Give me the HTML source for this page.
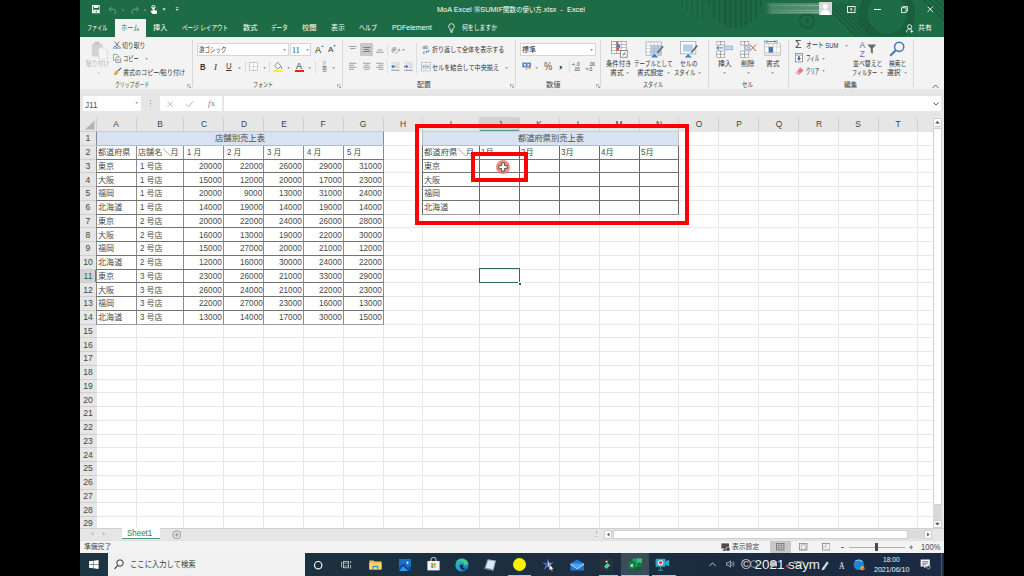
<!DOCTYPE html>
<html lang="ja"><head><meta charset="utf-8"><title>MoA Excel SUMIF</title><style>
html,body{margin:0;padding:0;}
body{width:1024px;height:576px;background:#000;position:relative;overflow:hidden;font-family:"Liberation Sans","Noto Sans CJK JP",sans-serif;}
#app{position:absolute;left:0;top:0;width:1024px;height:576px;overflow:hidden;}
#app div,#app span.t,#app svg{position:absolute;}
.t{white-space:nowrap;transform-origin:0 50%;display:block;}
</style></head><body><div id="app">
<div style="left:80px;top:0px;width:864px;height:36.5px;background:#1e6c46;"></div>
<div style="left:80px;top:36.5px;width:864px;height:52.5px;background:#f3f3f3;"></div>
<div style="left:80px;top:89px;width:864px;height:27.5px;background:#e6e6e6;"></div>
<div style="left:80px;top:116.5px;width:864px;height:412px;background:#ffffff;"></div>
<div style="left:80px;top:528px;width:864px;height:12.2px;background:#e6e6e6;"></div>
<div style="left:80px;top:540.2px;width:864px;height:13px;background:#f3f3f3;"></div>
<div style="left:80px;top:553.2px;width:864px;height:22.8px;background:#1d2f3c;"></div>
<div style="left:80px;top:116.5px;width:852.5px;height:15px;background:#e6e6e6;"></div>
<div style="left:80px;top:116.5px;width:16.5px;height:411.5px;background:#e6e6e6;"></div>
<svg style="left:80px;top:116.5px;" width="16.5" height="15" viewBox="0 0 16.5 15"><polygon points="14.5,3.5 14.5,12.5 5,12.5" fill="#b4b4b4"/></svg>
<div style="left:479.7px;top:116.5px;width:39.8px;height:15px;background:#d2d2d2;"></div>
<div style="left:479.7px;top:130.1px;width:39.8px;height:1.4px;background:#5a9c7a;"></div>
<div style="left:80px;top:269px;width:16.5px;height:13.75px;background:#d2d2d2;"></div>
<div style="left:95.3px;top:269px;width:1.2px;height:13.75px;background:#4a9070;"></div>
<div style="left:96px;top:131.5px;width:1px;height:396.5px;background:#e8e8e8;"></div>
<div style="left:96px;top:117.5px;width:1px;height:14px;background:#cfcfcf;"></div>
<div style="left:135.9px;top:131.5px;width:1px;height:396.5px;background:#e8e8e8;"></div>
<div style="left:135.9px;top:117.5px;width:1px;height:14px;background:#cfcfcf;"></div>
<div style="left:183.1px;top:131.5px;width:1px;height:396.5px;background:#e8e8e8;"></div>
<div style="left:183.1px;top:117.5px;width:1px;height:14px;background:#cfcfcf;"></div>
<div style="left:222.9px;top:131.5px;width:1px;height:396.5px;background:#e8e8e8;"></div>
<div style="left:222.9px;top:117.5px;width:1px;height:14px;background:#cfcfcf;"></div>
<div style="left:263.1px;top:131.5px;width:1px;height:396.5px;background:#e8e8e8;"></div>
<div style="left:263.1px;top:117.5px;width:1px;height:14px;background:#cfcfcf;"></div>
<div style="left:303px;top:131.5px;width:1px;height:396.5px;background:#e8e8e8;"></div>
<div style="left:303px;top:117.5px;width:1px;height:14px;background:#cfcfcf;"></div>
<div style="left:342.9px;top:131.5px;width:1px;height:396.5px;background:#e8e8e8;"></div>
<div style="left:342.9px;top:117.5px;width:1px;height:14px;background:#cfcfcf;"></div>
<div style="left:383px;top:131.5px;width:1px;height:396.5px;background:#e8e8e8;"></div>
<div style="left:383px;top:117.5px;width:1px;height:14px;background:#cfcfcf;"></div>
<div style="left:422px;top:131.5px;width:1px;height:396.5px;background:#e8e8e8;"></div>
<div style="left:422px;top:117.5px;width:1px;height:14px;background:#cfcfcf;"></div>
<div style="left:479.2px;top:131.5px;width:1px;height:396.5px;background:#e8e8e8;"></div>
<div style="left:479.2px;top:117.5px;width:1px;height:14px;background:#cfcfcf;"></div>
<div style="left:519px;top:131.5px;width:1px;height:396.5px;background:#e8e8e8;"></div>
<div style="left:519px;top:117.5px;width:1px;height:14px;background:#cfcfcf;"></div>
<div style="left:558.9px;top:131.5px;width:1px;height:396.5px;background:#e8e8e8;"></div>
<div style="left:558.9px;top:117.5px;width:1px;height:14px;background:#cfcfcf;"></div>
<div style="left:598.8px;top:131.5px;width:1px;height:396.5px;background:#e8e8e8;"></div>
<div style="left:598.8px;top:117.5px;width:1px;height:14px;background:#cfcfcf;"></div>
<div style="left:638.6px;top:131.5px;width:1px;height:396.5px;background:#e8e8e8;"></div>
<div style="left:638.6px;top:117.5px;width:1px;height:14px;background:#cfcfcf;"></div>
<div style="left:678.2px;top:131.5px;width:1px;height:396.5px;background:#e8e8e8;"></div>
<div style="left:678.2px;top:117.5px;width:1px;height:14px;background:#cfcfcf;"></div>
<div style="left:718px;top:131.5px;width:1px;height:396.5px;background:#e8e8e8;"></div>
<div style="left:718px;top:117.5px;width:1px;height:14px;background:#cfcfcf;"></div>
<div style="left:758.2px;top:131.5px;width:1px;height:396.5px;background:#e8e8e8;"></div>
<div style="left:758.2px;top:117.5px;width:1px;height:14px;background:#cfcfcf;"></div>
<div style="left:798.1px;top:131.5px;width:1px;height:396.5px;background:#e8e8e8;"></div>
<div style="left:798.1px;top:117.5px;width:1px;height:14px;background:#cfcfcf;"></div>
<div style="left:838px;top:131.5px;width:1px;height:396.5px;background:#e8e8e8;"></div>
<div style="left:838px;top:117.5px;width:1px;height:14px;background:#cfcfcf;"></div>
<div style="left:877.8px;top:131.5px;width:1px;height:396.5px;background:#e8e8e8;"></div>
<div style="left:877.8px;top:117.5px;width:1px;height:14px;background:#cfcfcf;"></div>
<div style="left:917.4px;top:131.5px;width:1px;height:396.5px;background:#e8e8e8;"></div>
<div style="left:917.4px;top:117.5px;width:1px;height:14px;background:#cfcfcf;"></div>
<div style="left:96.5px;top:131px;width:836px;height:1px;background:#e8e8e8;"></div>
<div style="left:80px;top:131px;width:16.5px;height:1px;background:#cfcfcf;"></div>
<div style="left:96.5px;top:144.75px;width:836px;height:1px;background:#e8e8e8;"></div>
<div style="left:80px;top:144.75px;width:16.5px;height:1px;background:#cfcfcf;"></div>
<div style="left:96.5px;top:158.5px;width:836px;height:1px;background:#e8e8e8;"></div>
<div style="left:80px;top:158.5px;width:16.5px;height:1px;background:#cfcfcf;"></div>
<div style="left:96.5px;top:172.25px;width:836px;height:1px;background:#e8e8e8;"></div>
<div style="left:80px;top:172.25px;width:16.5px;height:1px;background:#cfcfcf;"></div>
<div style="left:96.5px;top:186px;width:836px;height:1px;background:#e8e8e8;"></div>
<div style="left:80px;top:186px;width:16.5px;height:1px;background:#cfcfcf;"></div>
<div style="left:96.5px;top:199.75px;width:836px;height:1px;background:#e8e8e8;"></div>
<div style="left:80px;top:199.75px;width:16.5px;height:1px;background:#cfcfcf;"></div>
<div style="left:96.5px;top:213.5px;width:836px;height:1px;background:#e8e8e8;"></div>
<div style="left:80px;top:213.5px;width:16.5px;height:1px;background:#cfcfcf;"></div>
<div style="left:96.5px;top:227.25px;width:836px;height:1px;background:#e8e8e8;"></div>
<div style="left:80px;top:227.25px;width:16.5px;height:1px;background:#cfcfcf;"></div>
<div style="left:96.5px;top:241px;width:836px;height:1px;background:#e8e8e8;"></div>
<div style="left:80px;top:241px;width:16.5px;height:1px;background:#cfcfcf;"></div>
<div style="left:96.5px;top:254.75px;width:836px;height:1px;background:#e8e8e8;"></div>
<div style="left:80px;top:254.75px;width:16.5px;height:1px;background:#cfcfcf;"></div>
<div style="left:96.5px;top:268.5px;width:836px;height:1px;background:#e8e8e8;"></div>
<div style="left:80px;top:268.5px;width:16.5px;height:1px;background:#cfcfcf;"></div>
<div style="left:96.5px;top:282.25px;width:836px;height:1px;background:#e8e8e8;"></div>
<div style="left:80px;top:282.25px;width:16.5px;height:1px;background:#cfcfcf;"></div>
<div style="left:96.5px;top:296px;width:836px;height:1px;background:#e8e8e8;"></div>
<div style="left:80px;top:296px;width:16.5px;height:1px;background:#cfcfcf;"></div>
<div style="left:96.5px;top:309.75px;width:836px;height:1px;background:#e8e8e8;"></div>
<div style="left:80px;top:309.75px;width:16.5px;height:1px;background:#cfcfcf;"></div>
<div style="left:96.5px;top:323.5px;width:836px;height:1px;background:#e8e8e8;"></div>
<div style="left:80px;top:323.5px;width:16.5px;height:1px;background:#cfcfcf;"></div>
<div style="left:96.5px;top:337.25px;width:836px;height:1px;background:#e8e8e8;"></div>
<div style="left:80px;top:337.25px;width:16.5px;height:1px;background:#cfcfcf;"></div>
<div style="left:96.5px;top:351px;width:836px;height:1px;background:#e8e8e8;"></div>
<div style="left:80px;top:351px;width:16.5px;height:1px;background:#cfcfcf;"></div>
<div style="left:96.5px;top:364.75px;width:836px;height:1px;background:#e8e8e8;"></div>
<div style="left:80px;top:364.75px;width:16.5px;height:1px;background:#cfcfcf;"></div>
<div style="left:96.5px;top:378.5px;width:836px;height:1px;background:#e8e8e8;"></div>
<div style="left:80px;top:378.5px;width:16.5px;height:1px;background:#cfcfcf;"></div>
<div style="left:96.5px;top:392.25px;width:836px;height:1px;background:#e8e8e8;"></div>
<div style="left:80px;top:392.25px;width:16.5px;height:1px;background:#cfcfcf;"></div>
<div style="left:96.5px;top:406px;width:836px;height:1px;background:#e8e8e8;"></div>
<div style="left:80px;top:406px;width:16.5px;height:1px;background:#cfcfcf;"></div>
<div style="left:96.5px;top:419.75px;width:836px;height:1px;background:#e8e8e8;"></div>
<div style="left:80px;top:419.75px;width:16.5px;height:1px;background:#cfcfcf;"></div>
<div style="left:96.5px;top:433.5px;width:836px;height:1px;background:#e8e8e8;"></div>
<div style="left:80px;top:433.5px;width:16.5px;height:1px;background:#cfcfcf;"></div>
<div style="left:96.5px;top:447.25px;width:836px;height:1px;background:#e8e8e8;"></div>
<div style="left:80px;top:447.25px;width:16.5px;height:1px;background:#cfcfcf;"></div>
<div style="left:96.5px;top:461px;width:836px;height:1px;background:#e8e8e8;"></div>
<div style="left:80px;top:461px;width:16.5px;height:1px;background:#cfcfcf;"></div>
<div style="left:96.5px;top:474.75px;width:836px;height:1px;background:#e8e8e8;"></div>
<div style="left:80px;top:474.75px;width:16.5px;height:1px;background:#cfcfcf;"></div>
<div style="left:96.5px;top:488.5px;width:836px;height:1px;background:#e8e8e8;"></div>
<div style="left:80px;top:488.5px;width:16.5px;height:1px;background:#cfcfcf;"></div>
<div style="left:96.5px;top:502.25px;width:836px;height:1px;background:#e8e8e8;"></div>
<div style="left:80px;top:502.25px;width:16.5px;height:1px;background:#cfcfcf;"></div>
<div style="left:96.5px;top:516px;width:836px;height:1px;background:#e8e8e8;"></div>
<div style="left:80px;top:516px;width:16.5px;height:1px;background:#cfcfcf;"></div>
<span class="t" id="t1" style="left:116.45px;top:116.5px;font-size:9.4px;line-height:13.2px;color:#444;transform:translateX(-50%) scaleX(0.9);transform-origin:50% 50%;">A</span>
<span class="t" id="t2" style="left:160px;top:116.5px;font-size:9.4px;line-height:13.2px;color:#444;transform:translateX(-50%) scaleX(0.9);transform-origin:50% 50%;">B</span>
<span class="t" id="t3" style="left:203.5px;top:116.5px;font-size:9.4px;line-height:13.2px;color:#444;transform:translateX(-50%) scaleX(0.9);transform-origin:50% 50%;">C</span>
<span class="t" id="t4" style="left:243.5px;top:116.5px;font-size:9.4px;line-height:13.2px;color:#444;transform:translateX(-50%) scaleX(0.9);transform-origin:50% 50%;">D</span>
<span class="t" id="t5" style="left:283.55px;top:116.5px;font-size:9.4px;line-height:13.2px;color:#444;transform:translateX(-50%) scaleX(0.9);transform-origin:50% 50%;">E</span>
<span class="t" id="t6" style="left:323.45px;top:116.5px;font-size:9.4px;line-height:13.2px;color:#444;transform:translateX(-50%) scaleX(0.9);transform-origin:50% 50%;">F</span>
<span class="t" id="t7" style="left:363.45px;top:116.5px;font-size:9.4px;line-height:13.2px;color:#444;transform:translateX(-50%) scaleX(0.9);transform-origin:50% 50%;">G</span>
<span class="t" id="t8" style="left:403px;top:116.5px;font-size:9.4px;line-height:13.2px;color:#444;transform:translateX(-50%) scaleX(0.9);transform-origin:50% 50%;">H</span>
<span class="t" id="t9" style="left:451.1px;top:116.5px;font-size:9.4px;line-height:13.2px;color:#444;transform:translateX(-50%) scaleX(0.9);transform-origin:50% 50%;">I</span>
<span class="t" id="t10" style="left:499.6px;top:116.5px;font-size:9.4px;line-height:13.2px;color:#1f6e45;transform:translateX(-50%) scaleX(0.9);transform-origin:50% 50%;">J</span>
<span class="t" id="t11" style="left:539.45px;top:116.5px;font-size:9.4px;line-height:13.2px;color:#444;transform:translateX(-50%) scaleX(0.9);transform-origin:50% 50%;">K</span>
<span class="t" id="t12" style="left:579.35px;top:116.5px;font-size:9.4px;line-height:13.2px;color:#444;transform:translateX(-50%) scaleX(0.9);transform-origin:50% 50%;">L</span>
<span class="t" id="t13" style="left:619.2px;top:116.5px;font-size:9.4px;line-height:13.2px;color:#444;transform:translateX(-50%) scaleX(0.9);transform-origin:50% 50%;">M</span>
<span class="t" id="t14" style="left:658.9px;top:116.5px;font-size:9.4px;line-height:13.2px;color:#444;transform:translateX(-50%) scaleX(0.9);transform-origin:50% 50%;">N</span>
<span class="t" id="t15" style="left:698.6px;top:116.5px;font-size:9.4px;line-height:13.2px;color:#444;transform:translateX(-50%) scaleX(0.9);transform-origin:50% 50%;">O</span>
<span class="t" id="t16" style="left:738.6px;top:116.5px;font-size:9.4px;line-height:13.2px;color:#444;transform:translateX(-50%) scaleX(0.9);transform-origin:50% 50%;">P</span>
<span class="t" id="t17" style="left:778.65px;top:116.5px;font-size:9.4px;line-height:13.2px;color:#444;transform:translateX(-50%) scaleX(0.9);transform-origin:50% 50%;">Q</span>
<span class="t" id="t18" style="left:818.55px;top:116.5px;font-size:9.4px;line-height:13.2px;color:#444;transform:translateX(-50%) scaleX(0.9);transform-origin:50% 50%;">R</span>
<span class="t" id="t19" style="left:858.4px;top:116.5px;font-size:9.4px;line-height:13.2px;color:#444;transform:translateX(-50%) scaleX(0.9);transform-origin:50% 50%;">S</span>
<span class="t" id="t20" style="left:898.15px;top:116.5px;font-size:9.4px;line-height:13.2px;color:#444;transform:translateX(-50%) scaleX(0.9);transform-origin:50% 50%;">T</span>
<span class="t" id="t21" style="left:87.95px;top:131.28px;font-size:9.4px;line-height:13.2px;color:#444;transform:translateX(-50%) scaleX(0.92);transform-origin:50% 50%;">1</span>
<span class="t" id="t22" style="left:87.95px;top:145.03px;font-size:9.4px;line-height:13.2px;color:#444;transform:translateX(-50%) scaleX(0.92);transform-origin:50% 50%;">2</span>
<span class="t" id="t23" style="left:87.95px;top:158.78px;font-size:9.4px;line-height:13.2px;color:#444;transform:translateX(-50%) scaleX(0.92);transform-origin:50% 50%;">3</span>
<span class="t" id="t24" style="left:87.95px;top:172.53px;font-size:9.4px;line-height:13.2px;color:#444;transform:translateX(-50%) scaleX(0.92);transform-origin:50% 50%;">4</span>
<span class="t" id="t25" style="left:87.95px;top:186.28px;font-size:9.4px;line-height:13.2px;color:#444;transform:translateX(-50%) scaleX(0.92);transform-origin:50% 50%;">5</span>
<span class="t" id="t26" style="left:87.95px;top:200.03px;font-size:9.4px;line-height:13.2px;color:#444;transform:translateX(-50%) scaleX(0.92);transform-origin:50% 50%;">6</span>
<span class="t" id="t27" style="left:87.95px;top:213.78px;font-size:9.4px;line-height:13.2px;color:#444;transform:translateX(-50%) scaleX(0.92);transform-origin:50% 50%;">7</span>
<span class="t" id="t28" style="left:87.95px;top:227.53px;font-size:9.4px;line-height:13.2px;color:#444;transform:translateX(-50%) scaleX(0.92);transform-origin:50% 50%;">8</span>
<span class="t" id="t29" style="left:87.95px;top:241.28px;font-size:9.4px;line-height:13.2px;color:#444;transform:translateX(-50%) scaleX(0.92);transform-origin:50% 50%;">9</span>
<span class="t" id="t30" style="left:87.95px;top:255.03px;font-size:9.4px;line-height:13.2px;color:#444;transform:translateX(-50%) scaleX(0.92);transform-origin:50% 50%;">10</span>
<span class="t" id="t31" style="left:87.95px;top:268.77px;font-size:9.4px;line-height:13.2px;color:#1f6e45;transform:translateX(-50%) scaleX(0.92);transform-origin:50% 50%;">11</span>
<span class="t" id="t32" style="left:87.95px;top:282.52px;font-size:9.4px;line-height:13.2px;color:#444;transform:translateX(-50%) scaleX(0.92);transform-origin:50% 50%;">12</span>
<span class="t" id="t33" style="left:87.95px;top:296.27px;font-size:9.4px;line-height:13.2px;color:#444;transform:translateX(-50%) scaleX(0.92);transform-origin:50% 50%;">13</span>
<span class="t" id="t34" style="left:87.95px;top:310.02px;font-size:9.4px;line-height:13.2px;color:#444;transform:translateX(-50%) scaleX(0.92);transform-origin:50% 50%;">14</span>
<span class="t" id="t35" style="left:87.95px;top:323.77px;font-size:9.4px;line-height:13.2px;color:#444;transform:translateX(-50%) scaleX(0.92);transform-origin:50% 50%;">15</span>
<span class="t" id="t36" style="left:87.95px;top:337.52px;font-size:9.4px;line-height:13.2px;color:#444;transform:translateX(-50%) scaleX(0.92);transform-origin:50% 50%;">16</span>
<span class="t" id="t37" style="left:87.95px;top:351.27px;font-size:9.4px;line-height:13.2px;color:#444;transform:translateX(-50%) scaleX(0.92);transform-origin:50% 50%;">17</span>
<span class="t" id="t38" style="left:87.95px;top:365.02px;font-size:9.4px;line-height:13.2px;color:#444;transform:translateX(-50%) scaleX(0.92);transform-origin:50% 50%;">18</span>
<span class="t" id="t39" style="left:87.95px;top:378.77px;font-size:9.4px;line-height:13.2px;color:#444;transform:translateX(-50%) scaleX(0.92);transform-origin:50% 50%;">19</span>
<span class="t" id="t40" style="left:87.95px;top:392.52px;font-size:9.4px;line-height:13.2px;color:#444;transform:translateX(-50%) scaleX(0.92);transform-origin:50% 50%;">20</span>
<span class="t" id="t41" style="left:87.95px;top:406.27px;font-size:9.4px;line-height:13.2px;color:#444;transform:translateX(-50%) scaleX(0.92);transform-origin:50% 50%;">21</span>
<span class="t" id="t42" style="left:87.95px;top:420.02px;font-size:9.4px;line-height:13.2px;color:#444;transform:translateX(-50%) scaleX(0.92);transform-origin:50% 50%;">22</span>
<span class="t" id="t43" style="left:87.95px;top:433.77px;font-size:9.4px;line-height:13.2px;color:#444;transform:translateX(-50%) scaleX(0.92);transform-origin:50% 50%;">23</span>
<span class="t" id="t44" style="left:87.95px;top:447.52px;font-size:9.4px;line-height:13.2px;color:#444;transform:translateX(-50%) scaleX(0.92);transform-origin:50% 50%;">24</span>
<span class="t" id="t45" style="left:87.95px;top:461.27px;font-size:9.4px;line-height:13.2px;color:#444;transform:translateX(-50%) scaleX(0.92);transform-origin:50% 50%;">25</span>
<span class="t" id="t46" style="left:87.95px;top:475.02px;font-size:9.4px;line-height:13.2px;color:#444;transform:translateX(-50%) scaleX(0.92);transform-origin:50% 50%;">26</span>
<span class="t" id="t47" style="left:87.95px;top:488.77px;font-size:9.4px;line-height:13.2px;color:#444;transform:translateX(-50%) scaleX(0.92);transform-origin:50% 50%;">27</span>
<span class="t" id="t48" style="left:87.95px;top:502.52px;font-size:9.4px;line-height:13.2px;color:#444;transform:translateX(-50%) scaleX(0.92);transform-origin:50% 50%;">28</span>
<span class="t" id="t49" style="left:87.95px;top:516.27px;font-size:9.4px;line-height:13.2px;color:#444;transform:translateX(-50%) scaleX(0.92);transform-origin:50% 50%;">29</span>
<div style="left:96.5px;top:131.5px;width:287px;height:13.75px;background:#d8e2f0;"></div>
<div style="left:96.5px;top:145.25px;width:287px;height:178.75px;background:#ffffff;"></div>
<div style="left:96px;top:131.5px;width:1px;height:192.5px;background:#8c8c8c;"></div>
<div style="left:135.9px;top:145.25px;width:1px;height:178.75px;background:#8c8c8c;"></div>
<div style="left:183.1px;top:145.25px;width:1px;height:178.75px;background:#8c8c8c;"></div>
<div style="left:222.9px;top:145.25px;width:1px;height:178.75px;background:#8c8c8c;"></div>
<div style="left:263.1px;top:145.25px;width:1px;height:178.75px;background:#8c8c8c;"></div>
<div style="left:303px;top:145.25px;width:1px;height:178.75px;background:#8c8c8c;"></div>
<div style="left:342.9px;top:145.25px;width:1px;height:178.75px;background:#8c8c8c;"></div>
<div style="left:383px;top:131.5px;width:1px;height:192.5px;background:#8c8c8c;"></div>
<div style="left:96px;top:131px;width:288px;height:1px;background:#c6cedb;"></div>
<div style="left:96px;top:144.75px;width:288px;height:1px;background:#b4bdcc;"></div>
<div style="left:96px;top:158.5px;width:288px;height:1px;background:#737373;"></div>
<div style="left:96px;top:172.25px;width:288px;height:1px;background:#737373;"></div>
<div style="left:96px;top:186px;width:288px;height:1px;background:#737373;"></div>
<div style="left:96px;top:199.75px;width:288px;height:1px;background:#737373;"></div>
<div style="left:96px;top:213.5px;width:288px;height:1px;background:#737373;"></div>
<div style="left:96px;top:227.25px;width:288px;height:1px;background:#737373;"></div>
<div style="left:96px;top:241px;width:288px;height:1px;background:#737373;"></div>
<div style="left:96px;top:254.75px;width:288px;height:1px;background:#737373;"></div>
<div style="left:96px;top:268.5px;width:288px;height:1px;background:#737373;"></div>
<div style="left:96px;top:282.25px;width:288px;height:1px;background:#737373;"></div>
<div style="left:96px;top:296px;width:288px;height:1px;background:#737373;"></div>
<div style="left:96px;top:309.75px;width:288px;height:1px;background:#737373;"></div>
<div style="left:96px;top:323.5px;width:288px;height:1px;background:#9c9c9c;"></div>
<span class="t" id="t50" style="left:215px;top:133.38px;font-size:8.3px;line-height:11.6px;color:#4a4a4a;transform:scaleX(1.0041);">店舗別売上表</span>
<span class="t" id="t51" style="left:98.2px;top:147.12px;font-size:8.3px;line-height:11.6px;color:#4a4a4a;transform:scaleX(0.9728);">都道府県</span>
<span class="t" id="t52" style="left:138.1px;top:147.12px;font-size:8.3px;line-height:11.6px;color:#4a4a4a;transform:scaleX(0.9759);">店舗名＼月</span>
<span class="t" id="t53" style="left:186.9px;top:147.12px;font-size:8.3px;line-height:11.6px;color:#4a4a4a;transform:scaleX(0.9331);">1&nbsp;月</span>
<span class="t" id="t54" style="left:226.7px;top:147.12px;font-size:8.3px;line-height:11.6px;color:#4a4a4a;transform:scaleX(0.9331);">2&nbsp;月</span>
<span class="t" id="t55" style="left:266.9px;top:147.12px;font-size:8.3px;line-height:11.6px;color:#4a4a4a;transform:scaleX(0.9331);">3&nbsp;月</span>
<span class="t" id="t56" style="left:306.8px;top:147.12px;font-size:8.3px;line-height:11.6px;color:#4a4a4a;transform:scaleX(0.9331);">4&nbsp;月</span>
<span class="t" id="t57" style="left:346.7px;top:147.12px;font-size:8.3px;line-height:11.6px;color:#4a4a4a;transform:scaleX(0.9331);">5&nbsp;月</span>
<span class="t" id="t58" style="left:98.2px;top:160.88px;font-size:8.3px;line-height:11.6px;color:#4a4a4a;transform:scaleX(0.9754);">東京</span>
<span class="t" id="t59" style="left:139.9px;top:160.88px;font-size:8.3px;line-height:11.6px;color:#4a4a4a;transform:scaleX(0.9568);">1&nbsp;号店</span>
<span class="t" id="t60" style="left:199.35px;top:160.88px;font-size:8.3px;line-height:11.6px;color:#4a4a4a;transform:scaleX(0.9858);">20000</span>
<span class="t" id="t61" style="left:239.55px;top:160.88px;font-size:8.3px;line-height:11.6px;color:#4a4a4a;transform:scaleX(0.9858);">22000</span>
<span class="t" id="t62" style="left:279.45px;top:160.88px;font-size:8.3px;line-height:11.6px;color:#4a4a4a;transform:scaleX(0.9858);">26000</span>
<span class="t" id="t63" style="left:319.35px;top:160.88px;font-size:8.3px;line-height:11.6px;color:#4a4a4a;transform:scaleX(0.9858);">29000</span>
<span class="t" id="t64" style="left:359.45px;top:160.88px;font-size:8.3px;line-height:11.6px;color:#4a4a4a;transform:scaleX(0.9858);">31000</span>
<span class="t" id="t65" style="left:98.2px;top:174.62px;font-size:8.3px;line-height:11.6px;color:#4a4a4a;transform:scaleX(0.9754);">大阪</span>
<span class="t" id="t66" style="left:139.9px;top:174.62px;font-size:8.3px;line-height:11.6px;color:#4a4a4a;transform:scaleX(0.9568);">1&nbsp;号店</span>
<span class="t" id="t67" style="left:199.35px;top:174.62px;font-size:8.3px;line-height:11.6px;color:#4a4a4a;transform:scaleX(0.9858);">15000</span>
<span class="t" id="t68" style="left:239.55px;top:174.62px;font-size:8.3px;line-height:11.6px;color:#4a4a4a;transform:scaleX(0.9858);">12000</span>
<span class="t" id="t69" style="left:279.45px;top:174.62px;font-size:8.3px;line-height:11.6px;color:#4a4a4a;transform:scaleX(0.9858);">20000</span>
<span class="t" id="t70" style="left:319.35px;top:174.62px;font-size:8.3px;line-height:11.6px;color:#4a4a4a;transform:scaleX(0.9858);">17000</span>
<span class="t" id="t71" style="left:359.45px;top:174.62px;font-size:8.3px;line-height:11.6px;color:#4a4a4a;transform:scaleX(0.9858);">23000</span>
<span class="t" id="t72" style="left:98.2px;top:188.38px;font-size:8.3px;line-height:11.6px;color:#4a4a4a;transform:scaleX(0.9754);">福岡</span>
<span class="t" id="t73" style="left:139.9px;top:188.38px;font-size:8.3px;line-height:11.6px;color:#4a4a4a;transform:scaleX(0.9568);">1&nbsp;号店</span>
<span class="t" id="t74" style="left:199.35px;top:188.38px;font-size:8.3px;line-height:11.6px;color:#4a4a4a;transform:scaleX(0.9858);">20000</span>
<span class="t" id="t75" style="left:244.1px;top:188.38px;font-size:8.3px;line-height:11.6px;color:#4a4a4a;transform:scaleX(0.9854);">9000</span>
<span class="t" id="t76" style="left:279.45px;top:188.38px;font-size:8.3px;line-height:11.6px;color:#4a4a4a;transform:scaleX(0.9858);">13000</span>
<span class="t" id="t77" style="left:319.35px;top:188.38px;font-size:8.3px;line-height:11.6px;color:#4a4a4a;transform:scaleX(0.9858);">31000</span>
<span class="t" id="t78" style="left:359.45px;top:188.38px;font-size:8.3px;line-height:11.6px;color:#4a4a4a;transform:scaleX(0.9858);">24000</span>
<span class="t" id="t79" style="left:98.2px;top:202.12px;font-size:8.3px;line-height:11.6px;color:#4a4a4a;transform:scaleX(0.9757);">北海道</span>
<span class="t" id="t80" style="left:139.9px;top:202.12px;font-size:8.3px;line-height:11.6px;color:#4a4a4a;transform:scaleX(0.9568);">1&nbsp;号店</span>
<span class="t" id="t81" style="left:199.35px;top:202.12px;font-size:8.3px;line-height:11.6px;color:#4a4a4a;transform:scaleX(0.9858);">14000</span>
<span class="t" id="t82" style="left:239.55px;top:202.12px;font-size:8.3px;line-height:11.6px;color:#4a4a4a;transform:scaleX(0.9858);">19000</span>
<span class="t" id="t83" style="left:279.45px;top:202.12px;font-size:8.3px;line-height:11.6px;color:#4a4a4a;transform:scaleX(0.9858);">14000</span>
<span class="t" id="t84" style="left:319.35px;top:202.12px;font-size:8.3px;line-height:11.6px;color:#4a4a4a;transform:scaleX(0.9858);">19000</span>
<span class="t" id="t85" style="left:359.45px;top:202.12px;font-size:8.3px;line-height:11.6px;color:#4a4a4a;transform:scaleX(0.9858);">14000</span>
<span class="t" id="t86" style="left:98.2px;top:215.88px;font-size:8.3px;line-height:11.6px;color:#4a4a4a;transform:scaleX(0.9754);">東京</span>
<span class="t" id="t87" style="left:139.9px;top:215.88px;font-size:8.3px;line-height:11.6px;color:#4a4a4a;transform:scaleX(0.9568);">2&nbsp;号店</span>
<span class="t" id="t88" style="left:199.35px;top:215.88px;font-size:8.3px;line-height:11.6px;color:#4a4a4a;transform:scaleX(0.9858);">20000</span>
<span class="t" id="t89" style="left:239.55px;top:215.88px;font-size:8.3px;line-height:11.6px;color:#4a4a4a;transform:scaleX(0.9858);">22000</span>
<span class="t" id="t90" style="left:279.45px;top:215.88px;font-size:8.3px;line-height:11.6px;color:#4a4a4a;transform:scaleX(0.9858);">24000</span>
<span class="t" id="t91" style="left:319.35px;top:215.88px;font-size:8.3px;line-height:11.6px;color:#4a4a4a;transform:scaleX(0.9858);">26000</span>
<span class="t" id="t92" style="left:359.45px;top:215.88px;font-size:8.3px;line-height:11.6px;color:#4a4a4a;transform:scaleX(0.9858);">28000</span>
<span class="t" id="t93" style="left:98.2px;top:229.62px;font-size:8.3px;line-height:11.6px;color:#4a4a4a;transform:scaleX(0.9754);">大阪</span>
<span class="t" id="t94" style="left:139.9px;top:229.62px;font-size:8.3px;line-height:11.6px;color:#4a4a4a;transform:scaleX(0.9568);">2&nbsp;号店</span>
<span class="t" id="t95" style="left:199.35px;top:229.62px;font-size:8.3px;line-height:11.6px;color:#4a4a4a;transform:scaleX(0.9858);">16000</span>
<span class="t" id="t96" style="left:239.55px;top:229.62px;font-size:8.3px;line-height:11.6px;color:#4a4a4a;transform:scaleX(0.9858);">13000</span>
<span class="t" id="t97" style="left:279.45px;top:229.62px;font-size:8.3px;line-height:11.6px;color:#4a4a4a;transform:scaleX(0.9858);">19000</span>
<span class="t" id="t98" style="left:319.35px;top:229.62px;font-size:8.3px;line-height:11.6px;color:#4a4a4a;transform:scaleX(0.9858);">22000</span>
<span class="t" id="t99" style="left:359.45px;top:229.62px;font-size:8.3px;line-height:11.6px;color:#4a4a4a;transform:scaleX(0.9858);">30000</span>
<span class="t" id="t100" style="left:98.2px;top:243.38px;font-size:8.3px;line-height:11.6px;color:#4a4a4a;transform:scaleX(0.9754);">福岡</span>
<span class="t" id="t101" style="left:139.9px;top:243.38px;font-size:8.3px;line-height:11.6px;color:#4a4a4a;transform:scaleX(0.9568);">2&nbsp;号店</span>
<span class="t" id="t102" style="left:199.35px;top:243.38px;font-size:8.3px;line-height:11.6px;color:#4a4a4a;transform:scaleX(0.9858);">15000</span>
<span class="t" id="t103" style="left:239.55px;top:243.38px;font-size:8.3px;line-height:11.6px;color:#4a4a4a;transform:scaleX(0.9858);">27000</span>
<span class="t" id="t104" style="left:279.45px;top:243.38px;font-size:8.3px;line-height:11.6px;color:#4a4a4a;transform:scaleX(0.9858);">20000</span>
<span class="t" id="t105" style="left:319.35px;top:243.38px;font-size:8.3px;line-height:11.6px;color:#4a4a4a;transform:scaleX(0.9858);">21000</span>
<span class="t" id="t106" style="left:359.45px;top:243.38px;font-size:8.3px;line-height:11.6px;color:#4a4a4a;transform:scaleX(0.9858);">12000</span>
<span class="t" id="t107" style="left:98.2px;top:257.12px;font-size:8.3px;line-height:11.6px;color:#4a4a4a;transform:scaleX(0.9757);">北海道</span>
<span class="t" id="t108" style="left:139.9px;top:257.12px;font-size:8.3px;line-height:11.6px;color:#4a4a4a;transform:scaleX(0.9568);">2&nbsp;号店</span>
<span class="t" id="t109" style="left:199.35px;top:257.12px;font-size:8.3px;line-height:11.6px;color:#4a4a4a;transform:scaleX(0.9858);">12000</span>
<span class="t" id="t110" style="left:239.55px;top:257.12px;font-size:8.3px;line-height:11.6px;color:#4a4a4a;transform:scaleX(0.9858);">16000</span>
<span class="t" id="t111" style="left:279.45px;top:257.12px;font-size:8.3px;line-height:11.6px;color:#4a4a4a;transform:scaleX(0.9858);">30000</span>
<span class="t" id="t112" style="left:319.35px;top:257.12px;font-size:8.3px;line-height:11.6px;color:#4a4a4a;transform:scaleX(0.9858);">24000</span>
<span class="t" id="t113" style="left:359.45px;top:257.12px;font-size:8.3px;line-height:11.6px;color:#4a4a4a;transform:scaleX(0.9858);">22000</span>
<span class="t" id="t114" style="left:98.2px;top:270.88px;font-size:8.3px;line-height:11.6px;color:#4a4a4a;transform:scaleX(0.9754);">東京</span>
<span class="t" id="t115" style="left:139.9px;top:270.88px;font-size:8.3px;line-height:11.6px;color:#4a4a4a;transform:scaleX(0.9568);">3&nbsp;号店</span>
<span class="t" id="t116" style="left:199.35px;top:270.88px;font-size:8.3px;line-height:11.6px;color:#4a4a4a;transform:scaleX(0.9858);">23000</span>
<span class="t" id="t117" style="left:239.55px;top:270.88px;font-size:8.3px;line-height:11.6px;color:#4a4a4a;transform:scaleX(0.9858);">26000</span>
<span class="t" id="t118" style="left:279.45px;top:270.88px;font-size:8.3px;line-height:11.6px;color:#4a4a4a;transform:scaleX(0.9858);">21000</span>
<span class="t" id="t119" style="left:319.35px;top:270.88px;font-size:8.3px;line-height:11.6px;color:#4a4a4a;transform:scaleX(0.9858);">33000</span>
<span class="t" id="t120" style="left:359.45px;top:270.88px;font-size:8.3px;line-height:11.6px;color:#4a4a4a;transform:scaleX(0.9858);">29000</span>
<span class="t" id="t121" style="left:98.2px;top:284.62px;font-size:8.3px;line-height:11.6px;color:#4a4a4a;transform:scaleX(0.9754);">大阪</span>
<span class="t" id="t122" style="left:139.9px;top:284.62px;font-size:8.3px;line-height:11.6px;color:#4a4a4a;transform:scaleX(0.9568);">3&nbsp;号店</span>
<span class="t" id="t123" style="left:199.35px;top:284.62px;font-size:8.3px;line-height:11.6px;color:#4a4a4a;transform:scaleX(0.9858);">26000</span>
<span class="t" id="t124" style="left:239.55px;top:284.62px;font-size:8.3px;line-height:11.6px;color:#4a4a4a;transform:scaleX(0.9858);">24000</span>
<span class="t" id="t125" style="left:279.45px;top:284.62px;font-size:8.3px;line-height:11.6px;color:#4a4a4a;transform:scaleX(0.9858);">21000</span>
<span class="t" id="t126" style="left:319.35px;top:284.62px;font-size:8.3px;line-height:11.6px;color:#4a4a4a;transform:scaleX(0.9858);">22000</span>
<span class="t" id="t127" style="left:359.45px;top:284.62px;font-size:8.3px;line-height:11.6px;color:#4a4a4a;transform:scaleX(0.9858);">23000</span>
<span class="t" id="t128" style="left:98.2px;top:298.38px;font-size:8.3px;line-height:11.6px;color:#4a4a4a;transform:scaleX(0.9754);">福岡</span>
<span class="t" id="t129" style="left:139.9px;top:298.38px;font-size:8.3px;line-height:11.6px;color:#4a4a4a;transform:scaleX(0.9568);">3&nbsp;号店</span>
<span class="t" id="t130" style="left:199.35px;top:298.38px;font-size:8.3px;line-height:11.6px;color:#4a4a4a;transform:scaleX(0.9858);">22000</span>
<span class="t" id="t131" style="left:239.55px;top:298.38px;font-size:8.3px;line-height:11.6px;color:#4a4a4a;transform:scaleX(0.9858);">27000</span>
<span class="t" id="t132" style="left:279.45px;top:298.38px;font-size:8.3px;line-height:11.6px;color:#4a4a4a;transform:scaleX(0.9858);">23000</span>
<span class="t" id="t133" style="left:319.35px;top:298.38px;font-size:8.3px;line-height:11.6px;color:#4a4a4a;transform:scaleX(0.9858);">16000</span>
<span class="t" id="t134" style="left:359.45px;top:298.38px;font-size:8.3px;line-height:11.6px;color:#4a4a4a;transform:scaleX(0.9858);">13000</span>
<span class="t" id="t135" style="left:98.2px;top:312.12px;font-size:8.3px;line-height:11.6px;color:#4a4a4a;transform:scaleX(0.9757);">北海道</span>
<span class="t" id="t136" style="left:139.9px;top:312.12px;font-size:8.3px;line-height:11.6px;color:#4a4a4a;transform:scaleX(0.9568);">3&nbsp;号店</span>
<span class="t" id="t137" style="left:199.35px;top:312.12px;font-size:8.3px;line-height:11.6px;color:#4a4a4a;transform:scaleX(0.9858);">13000</span>
<span class="t" id="t138" style="left:239.55px;top:312.12px;font-size:8.3px;line-height:11.6px;color:#4a4a4a;transform:scaleX(0.9858);">14000</span>
<span class="t" id="t139" style="left:279.45px;top:312.12px;font-size:8.3px;line-height:11.6px;color:#4a4a4a;transform:scaleX(0.9858);">17000</span>
<span class="t" id="t140" style="left:319.35px;top:312.12px;font-size:8.3px;line-height:11.6px;color:#4a4a4a;transform:scaleX(0.9858);">30000</span>
<span class="t" id="t141" style="left:359.45px;top:312.12px;font-size:8.3px;line-height:11.6px;color:#4a4a4a;transform:scaleX(0.9858);">15000</span>
<div style="left:422.5px;top:131.5px;width:256.2px;height:13.75px;background:#d8e2f0;"></div>
<div style="left:422.5px;top:145.25px;width:256.2px;height:68.75px;background:#ffffff;"></div>
<div style="left:422px;top:131.5px;width:1px;height:13.75px;background:#b4bdcc;"></div>
<div style="left:422px;top:145.25px;width:1px;height:68.75px;background:#686868;"></div>
<div style="left:479.2px;top:145.25px;width:1px;height:0px;background:#b4bdcc;"></div>
<div style="left:479.2px;top:145.25px;width:1px;height:68.75px;background:#686868;"></div>
<div style="left:519px;top:145.25px;width:1px;height:0px;background:#b4bdcc;"></div>
<div style="left:519px;top:145.25px;width:1px;height:68.75px;background:#686868;"></div>
<div style="left:558.9px;top:145.25px;width:1px;height:0px;background:#b4bdcc;"></div>
<div style="left:558.9px;top:145.25px;width:1px;height:68.75px;background:#686868;"></div>
<div style="left:598.8px;top:145.25px;width:1px;height:0px;background:#b4bdcc;"></div>
<div style="left:598.8px;top:145.25px;width:1px;height:68.75px;background:#686868;"></div>
<div style="left:638.6px;top:145.25px;width:1px;height:0px;background:#b4bdcc;"></div>
<div style="left:638.6px;top:145.25px;width:1px;height:68.75px;background:#686868;"></div>
<div style="left:678.2px;top:131.5px;width:1px;height:13.75px;background:#b4bdcc;"></div>
<div style="left:678.2px;top:145.25px;width:1px;height:68.75px;background:#686868;"></div>
<div style="left:422px;top:131px;width:257.2px;height:1px;background:#c6cedb;"></div>
<div style="left:422px;top:144.75px;width:257.2px;height:1px;background:#b4bdcc;"></div>
<div style="left:422px;top:158.5px;width:257.2px;height:1px;background:#737373;"></div>
<div style="left:422px;top:172.25px;width:257.2px;height:1px;background:#737373;"></div>
<div style="left:422px;top:186px;width:257.2px;height:1px;background:#737373;"></div>
<div style="left:422px;top:199.75px;width:257.2px;height:1px;background:#737373;"></div>
<div style="left:422px;top:213.5px;width:257.2px;height:1px;background:#9c9c9c;"></div>
<span class="t" id="t142" style="left:517.6px;top:133.38px;font-size:8.3px;line-height:11.6px;color:#4a4a4a;transform:scaleX(0.9941);">都道府県別売上表</span>
<span class="t" id="t143" style="left:424.2px;top:147.12px;font-size:8.3px;line-height:11.6px;color:#4a4a4a;transform:scaleX(1.0041);">都道府県＼月</span>
<span class="t" id="t144" style="left:481.2px;top:147.12px;font-size:8.3px;line-height:11.6px;color:#4a4a4a;transform:scaleX(0.9674);">1月</span>
<span class="t" id="t145" style="left:521px;top:147.12px;font-size:8.3px;line-height:11.6px;color:#4a4a4a;transform:scaleX(0.9674);">2月</span>
<span class="t" id="t146" style="left:560.9px;top:147.12px;font-size:8.3px;line-height:11.6px;color:#4a4a4a;transform:scaleX(0.9674);">3月</span>
<span class="t" id="t147" style="left:600.8px;top:147.12px;font-size:8.3px;line-height:11.6px;color:#4a4a4a;transform:scaleX(0.9674);">4月</span>
<span class="t" id="t148" style="left:640.6px;top:147.12px;font-size:8.3px;line-height:11.6px;color:#4a4a4a;transform:scaleX(0.9674);">5月</span>
<span class="t" id="t149" style="left:424.2px;top:160.88px;font-size:8.3px;line-height:11.6px;color:#4a4a4a;transform:scaleX(0.9754);">東京</span>
<span class="t" id="t150" style="left:424.2px;top:174.62px;font-size:8.3px;line-height:11.6px;color:#4a4a4a;transform:scaleX(0.9754);">大阪</span>
<span class="t" id="t151" style="left:424.2px;top:188.38px;font-size:8.3px;line-height:11.6px;color:#4a4a4a;transform:scaleX(0.9754);">福岡</span>
<span class="t" id="t152" style="left:424.2px;top:202.12px;font-size:8.3px;line-height:11.6px;color:#4a4a4a;transform:scaleX(0.9757);">北海道</span>
<div style="left:479px;top:268.3px;width:41.1px;height:15.15px;border:1.1px solid #2c7050;box-sizing:border-box;"></div>
<div style="left:518.2px;top:281.55px;width:2.3px;height:2.3px;background:#235c42;border:0.4px solid #fff;"></div>
<div style="left:415.4px;top:124.2px;width:273.6px;height:100.5px;border:4.4px solid #fb0007;box-sizing:border-box;"></div>
<div style="left:471.4px;top:151.5px;width:56.8px;height:30.3px;border:4.3px solid #fb0007;box-sizing:border-box;"></div>
<div style="left:496.3px;top:160.3px;width:14px;height:14px;background:rgba(240,104,94,0.78);border-radius:50%;"></div>
<svg style="left:498.3px;top:162.3px;" width="10" height="10" viewBox="0 0 10 10"><path d="M3.6 0.8h2.8v2.8h2.8v2.8h-2.8v2.8h-2.8v-2.8h-2.8v-2.8h2.8z" fill="#fff" stroke="#4a4a4a" stroke-width="0.9"/></svg>
<div style="left:932.5px;top:116.5px;width:11.5px;height:411.5px;background:#e9e9e9;"></div>
<div style="left:933.4px;top:118.3px;width:8.9px;height:8.6px;background:#ffffff;border:0.5px solid #d0d0d0;box-sizing:border-box;"></div>
<div style="left:933.4px;top:127.7px;width:8.9px;height:377.5px;background:#ffffff;border:0.5px solid #d0d0d0;box-sizing:border-box;"></div>
<div style="left:933.4px;top:505.2px;width:8.9px;height:15px;background:#d9d9d9;"></div>
<div style="left:933.4px;top:520.3px;width:8.9px;height:8.2px;background:#ffffff;border:0.5px solid #d0d0d0;box-sizing:border-box;"></div>
<svg style="left:933.4px;top:118.3px;" width="8.9" height="8.6" viewBox="0 0 8.9 8.6"><polygon points="4.45,3 6.9,5.6 2,5.6" fill="#555"/></svg>
<svg style="left:933.4px;top:520.3px;" width="8.9" height="8.2" viewBox="0 0 8.9 8.2"><polygon points="4.45,5.4 6.9,2.8 2,2.8" fill="#555"/></svg>
<svg style="left:80px;top:0px;" width="864" height="36.5" viewBox="0 0 864 36.5"><defs><clipPath id="cp1"><circle cx="655" cy="1" r="27"/></clipPath><clipPath id="cp2"><rect x="0" y="0" width="864" height="36.5"/></clipPath></defs><g clip-path="url(#cp1)"><rect x="628" y="0" width="2.2" height="30" fill="#195f3e"/><rect x="633.2" y="0" width="2.2" height="30" fill="#195f3e"/><rect x="638.4" y="0" width="2.2" height="30" fill="#195f3e"/><rect x="643.6" y="0" width="3.4" height="30" fill="#195f3e"/><rect x="648.8" y="0" width="3.4" height="30" fill="#195f3e"/><rect x="654" y="0" width="3.4" height="30" fill="#195f3e"/><rect x="659.2" y="0" width="3.4" height="30" fill="#195f3e"/><rect x="664.4" y="0" width="3.4" height="30" fill="#195f3e"/><rect x="669.6" y="0" width="2.2" height="30" fill="#195f3e"/><rect x="674.8" y="0" width="2.2" height="30" fill="#195f3e"/><rect x="680" y="0" width="2.2" height="30" fill="#195f3e"/></g><rect x="601" y="0" width="1.6" height="8" fill="#195f3e" opacity="0.7"/><rect x="606.2" y="0" width="1.6" height="11" fill="#195f3e" opacity="0.7"/><rect x="611.4" y="0" width="1.6" height="14" fill="#195f3e" opacity="0.7"/><rect x="616.6" y="0" width="1.6" height="17" fill="#195f3e" opacity="0.7"/><rect x="621.8" y="0" width="1.6" height="20" fill="#195f3e" opacity="0.7"/><g clip-path="url(#cp2)"><circle cx="807" cy="14" r="24" fill="none" stroke="#195f3e" stroke-width="8.5"/><circle cx="727" cy="21" r="7" fill="none" stroke="#195f3e" stroke-width="2.6"/><circle cx="727" cy="21" r="2.4" fill="#195f3e"/><line x1="744" y1="4" x2="778" y2="38" stroke="#195f3e" stroke-width="2"/><line x1="749" y1="4" x2="783" y2="38" stroke="#195f3e" stroke-width="2"/><line x1="754" y1="4" x2="788" y2="38" stroke="#195f3e" stroke-width="2"/><line x1="759" y1="4" x2="793" y2="38" stroke="#195f3e" stroke-width="2"/><line x1="764" y1="4" x2="798" y2="38" stroke="#195f3e" stroke-width="2"/><line x1="769" y1="4" x2="803" y2="38" stroke="#195f3e" stroke-width="2"/><line x1="842" y1="-2" x2="866" y2="22" stroke="#195f3e" stroke-width="2"/><line x1="848" y1="-2" x2="872" y2="22" stroke="#195f3e" stroke-width="2"/><line x1="854" y1="-2" x2="878" y2="22" stroke="#195f3e" stroke-width="2"/><line x1="860" y1="-2" x2="884" y2="22" stroke="#195f3e" stroke-width="2"/></g></svg>
<svg style="left:91.6px;top:5.4px;" width="8.6" height="8.4" viewBox="0 0 8.6 8.4"><path d="M0.6 0.6h6.2l1.2 1.2v6h-7.4z" fill="none" stroke="#fff" stroke-width="1.1"/><rect x="2" y="0.8" width="4.2" height="2.2" fill="#fff"/><rect x="1.4" y="4.8" width="5.6" height="3" fill="#fff"/><rect x="3.6" y="5.8" width="1.2" height="1.6" fill="#1e6c46"/></svg>
<svg style="left:108px;top:5.5px;" width="9.5" height="8.5" viewBox="0 0 9.5 8.5"><path d="M1 3.2h4.6a2.7 2.7 0 0 1 0 5.2h-1.2" fill="none" stroke="#6fa289" stroke-width="1"/><path d="M3.3 0.8L0.9 3.2L3.3 5.6" fill="none" stroke="#6fa289" stroke-width="1"/></svg>
<svg style="left:120.5px;top:8.5px;" width="4" height="3" viewBox="0 0 4 3"><polygon points="0.5,0.5 3.5,0.5 2,2.3" fill="#6fa289"/></svg>
<svg style="left:129.8px;top:5.5px;" width="9.5" height="8.5" viewBox="0 0 9.5 8.5"><path d="M8.5 3.2h-4.6a2.7 2.7 0 0 0 0 5.2h1.2" fill="none" stroke="#6fa289" stroke-width="1"/><path d="M6.2 0.8L8.6 3.2L6.2 5.6" fill="none" stroke="#6fa289" stroke-width="1"/></svg>
<svg style="left:142.5px;top:8.5px;" width="4" height="3" viewBox="0 0 4 3"><polygon points="0.5,0.5 3.5,0.5 2,2.3" fill="#6fa289"/></svg>
<svg style="left:150.3px;top:4.6px;" width="7.5" height="9.5" viewBox="0 0 7.5 9.5"><circle cx="3.4" cy="2.1" r="1.7" fill="none" stroke="#fff" stroke-width="0.9"/><path d="M2.6 2v4.2l-1.3-0.6l-0.8 0.9l2.3 2.7h3.7l0.6-3.4l-2.9-0.9v-2.9z" fill="#fff"/></svg>
<svg style="left:162.2px;top:8.4px;" width="4.2" height="3" viewBox="0 0 4.2 3"><polygon points="0.4,0.4 3.8,0.4 2.1,2.5" fill="#fff"/></svg>
<svg style="left:175.4px;top:7.4px;" width="4.2" height="4.6" viewBox="0 0 4.2 4.6"><rect x="0.8" y="0.4" width="2.6" height="0.7" fill="#e4efe9"/><polygon points="0.6,2 3.6,2 2.1,3.8" fill="#e4efe9"/></svg>
<span class="t" id="t153" style="left:437.3px;top:3.95px;font-size:7.9px;line-height:11.1px;color:#ffffff;transform:scaleX(0.9294);">MoA Excel <span style="position:static;font-size:0.9em">㉟</span>SUMIF<span style="position:static;font-size:0.88em">関数の使い方</span>.xlsx&nbsp;&nbsp;-&nbsp;&nbsp;Excel</span>
<div style="left:765px;top:3.2px;width:54px;height:11px;background:linear-gradient(90deg,rgba(255,255,255,0) 0%,rgba(255,255,255,0.17) 12%,rgba(255,255,255,0.26) 100%);"></div>
<div style="left:769px;top:5.2px;width:50px;height:0.9px;background:linear-gradient(90deg,rgba(255,255,255,0.05),rgba(255,255,255,0.3));"></div>
<div style="left:769px;top:7.6px;width:50px;height:0.9px;background:linear-gradient(90deg,rgba(255,255,255,0.05),rgba(255,255,255,0.3));"></div>
<div style="left:769px;top:10px;width:50px;height:0.9px;background:linear-gradient(90deg,rgba(255,255,255,0.05),rgba(255,255,255,0.3));"></div>
<div style="left:769px;top:12.4px;width:50px;height:0.9px;background:linear-gradient(90deg,rgba(255,255,255,0.05),rgba(255,255,255,0.3));"></div>
<div style="left:819px;top:2px;width:12.5px;height:13.2px;background:#d6d6d6;"></div>
<svg style="left:819px;top:2px;" width="12.5" height="13.2" viewBox="0 0 12.5 13.2"><circle cx="6.25" cy="4.6" r="2.5" fill="#fff"/><path d="M1.6 13.2c0-4 2-5.4 4.65-5.4s4.65 1.4 4.65 5.4z" fill="#fff"/></svg>
<svg style="left:847px;top:5.5px;" width="8.5" height="7" viewBox="0 0 8.5 7"><rect x="0.5" y="0.5" width="7.5" height="6" fill="none" stroke="#fff" stroke-width="0.9"/><path d="M4.25 5.3V2.4M2.9 3.6l1.35-1.3l1.35 1.3" fill="none" stroke="#fff" stroke-width="0.8"/></svg>
<div style="left:874.2px;top:9.1px;width:6.4px;height:0.9px;background:#fff;"></div>
<svg style="left:900.6px;top:5.7px;" width="8" height="8" viewBox="0 0 8 8"><rect x="0.5" y="1.8" width="4.6" height="4.6" fill="none" stroke="#fff" stroke-width="0.8"/><path d="M1.9 1.8V0.5h4.6v4.6H5.1" fill="none" stroke="#fff" stroke-width="0.8"/></svg>
<svg style="left:927.4px;top:6.2px;" width="7" height="7" viewBox="0 0 7 7"><path d="M0.6 0.6L5.9 5.9M5.9 0.6L0.6 5.9" stroke="#fff" stroke-width="0.9" fill="none"/></svg>
<div style="left:115px;top:19.3px;width:31px;height:17.5px;background:#f3f3f3;"></div>
<span class="t" id="t154" style="left:86.8px;top:23px;font-size:7.4px;line-height:10.4px;color:#ffffff;transform:scaleX(0.6863);">ファイル</span>
<span class="t" id="t155" style="left:121.2px;top:23px;font-size:7.4px;line-height:10.4px;color:#1e6c46;transform:scaleX(0.8336);">ホーム</span>
<span class="t" id="t156" style="left:153.2px;top:23px;font-size:7.4px;line-height:10.4px;color:#ffffff;transform:scaleX(0.9664);">挿入</span>
<span class="t" id="t157" style="left:181.8px;top:23px;font-size:7.4px;line-height:10.4px;color:#ffffff;transform:scaleX(0.7570);">ページ レイアウト</span>
<span class="t" id="t158" style="left:242.5px;top:23px;font-size:7.4px;line-height:10.4px;color:#ffffff;transform:scaleX(0.9799);">数式</span>
<span class="t" id="t159" style="left:271.2px;top:23px;font-size:7.4px;line-height:10.4px;color:#ffffff;transform:scaleX(0.7572);">データ</span>
<span class="t" id="t160" style="left:302px;top:23px;font-size:7.4px;line-height:10.4px;color:#ffffff;transform:scaleX(0.9799);">校閲</span>
<span class="t" id="t161" style="left:331px;top:23px;font-size:7.4px;line-height:10.4px;color:#ffffff;transform:scaleX(0.9326);">表示</span>
<span class="t" id="t162" style="left:359px;top:23px;font-size:7.4px;line-height:10.4px;color:#ffffff;transform:scaleX(0.8113);">ヘルプ</span>
<span class="t" id="t163" style="left:391.8px;top:23px;font-size:7.4px;line-height:10.4px;color:#ffffff;transform:scaleX(0.9665);">PDFelement</span>
<svg style="left:447.5px;top:22.7px;" width="7" height="10.5" viewBox="0 0 7 10.5"><path d="M3.5 0.7a2.7 2.7 0 0 1 1.5 5v1.5h-3v-1.5a2.7 2.7 0 0 1 1.5-5z" fill="none" stroke="#fff" stroke-width="0.8"/><path d="M2.2 8.4h2.6M2.6 9.6h1.8" stroke="#fff" stroke-width="0.7"/></svg>
<span class="t" id="t164" style="left:462.2px;top:23px;font-size:7.4px;line-height:10.4px;color:#ffffff;transform:scaleX(0.7890);">何をしますか</span>
<svg style="left:906.3px;top:24px;" width="8" height="9" viewBox="0 0 8 9"><circle cx="3.6" cy="2.8" r="2.1" fill="none" stroke="#fff" stroke-width="0.85"/><path d="M0.5 8.4c0-2.4 1.4-3.4 3.1-3.4c0.9 0 1.7 0.3 2.2 0.8M5.7 6v2.8M4.3 7.4h2.8" fill="none" stroke="#fff" stroke-width="0.85"/></svg>
<span class="t" id="t165" style="left:918px;top:22.5px;font-size:7.4px;line-height:10.4px;color:#ffffff;transform:scaleX(0.9326);">共有</span>
<div style="left:192.3px;top:39.5px;width:0.9px;height:47px;background:#d8d8d8;"></div>
<div style="left:342.2px;top:39.5px;width:0.9px;height:47px;background:#d8d8d8;"></div>
<div style="left:515.2px;top:39.5px;width:0.9px;height:47px;background:#d8d8d8;"></div>
<div style="left:600.3px;top:39.5px;width:0.9px;height:47px;background:#d8d8d8;"></div>
<div style="left:707.9px;top:39.5px;width:0.9px;height:47px;background:#d8d8d8;"></div>
<div style="left:788.2px;top:39.5px;width:0.9px;height:47px;background:#d8d8d8;"></div>
<div style="left:913.1px;top:39.5px;width:0.9px;height:47px;background:#d8d8d8;"></div>
<span class="t" id="t166" style="left:114.6px;top:80.45px;font-size:6.9px;line-height:9.7px;color:#444;transform:scaleX(0.7049);">クリップボード</span>
<span class="t" id="t167" style="left:252.5px;top:80.45px;font-size:6.9px;line-height:9.7px;color:#444;transform:scaleX(0.7256);">フォント</span>
<span class="t" id="t168" style="left:417.2px;top:80.45px;font-size:6.9px;line-height:9.7px;color:#444;transform:scaleX(1.0014);">配置</span>
<span class="t" id="t169" style="left:545.8px;top:80.45px;font-size:6.9px;line-height:9.7px;color:#444;transform:scaleX(1.0522);">数値</span>
<span class="t" id="t170" style="left:643.2px;top:80.45px;font-size:6.9px;line-height:9.7px;color:#444;transform:scaleX(0.7256);">スタイル</span>
<span class="t" id="t171" style="left:742px;top:80.45px;font-size:6.9px;line-height:9.7px;color:#444;transform:scaleX(0.8127);">セル</span>
<span class="t" id="t172" style="left:844px;top:80.45px;font-size:6.9px;line-height:9.7px;color:#444;transform:scaleX(0.9578);">編集</span>
<svg style="left:186.5px;top:83.6px;" width="4" height="4" viewBox="0 0 4 4"><path d="M0.3 3.4V0.3H3.4" fill="none" stroke="#777" stroke-width="0.6"/><path d="M1.6 1.6L3.6 3.6M3.6 2.2v1.4h-1.4" fill="none" stroke="#777" stroke-width="0.6"/></svg>
<svg style="left:336.5px;top:83.6px;" width="4" height="4" viewBox="0 0 4 4"><path d="M0.3 3.4V0.3H3.4" fill="none" stroke="#777" stroke-width="0.6"/><path d="M1.6 1.6L3.6 3.6M3.6 2.2v1.4h-1.4" fill="none" stroke="#777" stroke-width="0.6"/></svg>
<svg style="left:509.5px;top:83.6px;" width="4" height="4" viewBox="0 0 4 4"><path d="M0.3 3.4V0.3H3.4" fill="none" stroke="#777" stroke-width="0.6"/><path d="M1.6 1.6L3.6 3.6M3.6 2.2v1.4h-1.4" fill="none" stroke="#777" stroke-width="0.6"/></svg>
<svg style="left:595.5px;top:83.6px;" width="4" height="4" viewBox="0 0 4 4"><path d="M0.3 3.4V0.3H3.4" fill="none" stroke="#777" stroke-width="0.6"/><path d="M1.6 1.6L3.6 3.6M3.6 2.2v1.4h-1.4" fill="none" stroke="#777" stroke-width="0.6"/></svg>
<svg style="left:90.5px;top:40.6px;" width="18" height="18.6" viewBox="0 0 18 18.6"><rect x="0.8" y="2.4" width="10.6" height="13.2" rx="0.8" fill="#d2d2d2"/><rect x="3.6" y="0.6" width="5" height="3.4" rx="0.8" fill="#c4c4c4"/><path d="M7.6 7h6l2.8 2.8v8.2h-8.8z" fill="#f6f6f6" stroke="#cfcfcf" stroke-width="0.7"/></svg>
<span class="t" id="t173" style="left:86.2px;top:59.15px;font-size:7.2px;line-height:10.1px;color:#b3b3b3;transform:scaleX(0.8100);">貼り付け</span>
<svg style="left:96.9px;top:71.8px;" width="3.2" height="2.2" viewBox="0 0 3.2 2.2"><polygon points="0.3,0.3 2.9,0.3 1.6,1.8" fill="#bdbdbd"/></svg>
<svg style="left:113.2px;top:40.8px;" width="8" height="8.6" viewBox="0 0 8 8.6"><path d="M1.6 0.5L5.4 5.6M6.2 0.5L2.4 5.6" stroke="#555" stroke-width="0.8" fill="none"/><circle cx="1.9" cy="6.9" r="1.4" fill="none" stroke="#3f78c2" stroke-width="0.8"/><circle cx="5.9" cy="6.9" r="1.4" fill="none" stroke="#3f78c2" stroke-width="0.8"/></svg>
<span class="t" id="t174" style="left:122.3px;top:40.95px;font-size:7.2px;line-height:10.1px;color:#333333;transform:scaleX(0.8135);">切り取り</span>
<svg style="left:113.2px;top:53.8px;" width="8.4" height="9" viewBox="0 0 8.4 9"><path d="M0.5 0.5h3.6l1.3 1.3v4.4h-4.9z" fill="#fff" stroke="#777" stroke-width="0.7"/><path d="M3 3h3.3l1.4 1.4v4.1h-4.7z" fill="#fff" stroke="#777" stroke-width="0.7"/><path d="M4 5.3h2.6M4 6.8h2.6" stroke="#3f78c2" stroke-width="0.6"/></svg>
<span class="t" id="t175" style="left:122.6px;top:54.25px;font-size:7.2px;line-height:10.1px;color:#333333;transform:scaleX(0.7230);">コピー</span>
<svg style="left:144.9px;top:58px;" width="3.2" height="2.2" viewBox="0 0 3.2 2.2"><polygon points="0.3,0.3 2.9,0.3 1.6,1.8" fill="#777"/></svg>
<svg style="left:112.8px;top:67px;" width="9" height="9" viewBox="0 0 9 9"><path d="M8.2 0.8L4.4 4.4" stroke="#555" stroke-width="1.1"/><path d="M3.2 3.4l2.4 2.4l-2.7 2.5c-1 0.6-2.4-0.8-1.9-1.9z" fill="#e8a33a"/></svg>
<span class="t" id="t176" style="left:122.6px;top:67.95px;font-size:7.2px;line-height:10.1px;color:#333333;transform:scaleX(0.8393);">書式のコピー/貼り付け</span>
<div style="left:196.8px;top:43px;width:92.2px;height:13.4px;background:#fff;border:0.6px solid #d6d6d6;box-sizing:border-box;"></div>
<span class="t" id="t177" style="left:198.5px;top:45.15px;font-size:7.2px;line-height:10.1px;color:#333333;transform:scaleX(0.7649);">游ゴシック</span>
<svg style="left:282.7px;top:48.8px;" width="3.2" height="2.2" viewBox="0 0 3.2 2.2"><polygon points="0.3,0.3 2.9,0.3 1.6,1.8" fill="#666"/></svg>
<div style="left:290px;top:43px;width:21.2px;height:13.4px;background:#fff;border:0.6px solid #d6d6d6;box-sizing:border-box;"></div>
<span class="t" id="t178" style="left:291.8px;top:44.15px;font-size:9.2px;line-height:12.9px;color:#333333;transform:scaleX(0.8578);font-family:&quot;Liberation Serif&quot;,serif;">11</span>
<svg style="left:305.9px;top:48.8px;" width="3.2" height="2.2" viewBox="0 0 3.2 2.2"><polygon points="0.3,0.3 2.9,0.3 1.6,1.8" fill="#666"/></svg>
<span class="t" id="t179" style="left:315.4px;top:43.9px;font-size:9px;line-height:12.6px;color:#333333;transform:scaleX(1.0306);">A</span>
<svg style="left:320.6px;top:45.2px;" width="3" height="2.4" viewBox="0 0 3 2.4"><polygon points="1.5,0.2 2.8,2 0.2,2" fill="#3f78c2"/></svg>
<span class="t" id="t180" style="left:328px;top:45.35px;font-size:7.8px;line-height:10.9px;color:#333333;transform:scaleX(1.0378);">A</span>
<svg style="left:332.8px;top:45.2px;" width="3" height="2.4" viewBox="0 0 3 2.4"><polygon points="1.5,2 2.8,0.2 0.2,0.2" fill="#3f78c2"/></svg>
<span class="t" id="t181" style="left:200.3px;top:60.8px;font-size:8.6px;line-height:12px;color:#333;font-weight:700;transform:scaleX(0.9005);">B</span>
<span class="t" id="t182" style="left:214.4px;top:60.8px;font-size:8.6px;line-height:12px;color:#333;font-style:italic;transform:scaleX(1.0435);font-family:&quot;Liberation Serif&quot;,serif;">I</span>
<span class="t" id="t183" style="left:226.2px;top:60.9px;font-size:8.4px;line-height:11.8px;color:#333;transform:scaleX(0.9237);text-decoration:underline;">U</span>
<svg style="left:238px;top:66.5px;" width="3.2" height="2.2" viewBox="0 0 3.2 2.2"><polygon points="0.3,0.3 2.9,0.3 1.6,1.8" fill="#7a7a7a"/></svg>
<div style="left:245.3px;top:60.5px;width:0.7px;height:12.5px;background:#dedede;"></div>
<svg style="left:249px;top:62.2px;" width="9" height="9" viewBox="0 0 9 9"><rect x="0.5" y="0.5" width="8" height="8" fill="#fff" stroke="#b4b4b4" stroke-width="0.7"/><path d="M4.5 0.5v8M0.5 4.5h8" stroke="#c6c6c6" stroke-width="0.6"/></svg>
<svg style="left:262.8px;top:66.5px;" width="3.2" height="2.2" viewBox="0 0 3.2 2.2"><polygon points="0.3,0.3 2.9,0.3 1.6,1.8" fill="#7a7a7a"/></svg>
<div style="left:269.4px;top:60.5px;width:0.7px;height:12.5px;background:#dedede;"></div>
<svg style="left:273px;top:60.6px;" width="10" height="11.5" viewBox="0 0 10 11.5"><path d="M4.6 1.2L8 5.2L4.8 8L1.8 4.8z" fill="#fdfdfd" stroke="#666" stroke-width="0.7"/><path d="M8.2 5.6c0.9 1.2 1 1.9 0.4 2.3c-0.6 0.3-1-0.6-0.4-2.3z" fill="#3f78c2"/><rect x="0.4" y="9" width="9.2" height="2.3" fill="#ffe92c"/></svg>
<svg style="left:286.6px;top:66.5px;" width="3.2" height="2.2" viewBox="0 0 3.2 2.2"><polygon points="0.3,0.3 2.9,0.3 1.6,1.8" fill="#7a7a7a"/></svg>
<span class="t" id="t184" style="left:296.2px;top:59.6px;font-size:8.6px;line-height:12px;color:#333;transform:scaleX(1.0463);">A</span>
<div style="left:294.6px;top:70.1px;width:9.2px;height:2.2px;background:#e81f1f;"></div>
<svg style="left:307.6px;top:66.5px;" width="3.2" height="2.2" viewBox="0 0 3.2 2.2"><polygon points="0.3,0.3 2.9,0.3 1.6,1.8" fill="#7a7a7a"/></svg>
<div style="left:315.3px;top:60.5px;width:0.7px;height:12.5px;background:#e0e0e0;"></div>
<span class="t" id="t185" style="left:322px;top:61.4px;font-size:4.6px;line-height:6.4px;color:#555;transform:scaleX(0.9112);">ア</span>
<span class="t" id="t186" style="left:321.6px;top:66px;font-size:5.4px;line-height:7.6px;color:#555;transform:scaleX(0.9249);">亜</span>
<svg style="left:332.2px;top:66.5px;" width="3.2" height="2.2" viewBox="0 0 3.2 2.2"><polygon points="0.3,0.3 2.9,0.3 1.6,1.8" fill="#7a7a7a"/></svg>
<svg style="left:349.4px;top:43.6px;" width="10" height="10" viewBox="0 0 10 10"><rect x="0" y="2" width="7.6" height="0.8" fill="#8a8a8a"/><rect x="1.2" y="4.2" width="5.2" height="0.8" fill="#8a8a8a"/></svg>
<div style="left:360.2px;top:43px;width:12.8px;height:13.4px;background:#c9c9c9;"></div>
<svg style="left:362.9px;top:45.2px;" width="10" height="10" viewBox="0 0 10 10"><rect x="0" y="2.2" width="7.4" height="0.8" fill="#6d6d6d"/><rect x="1.2" y="4.1" width="5" height="0.8" fill="#6d6d6d"/><rect x="0" y="6" width="7.4" height="0.8" fill="#6d6d6d"/></svg>
<svg style="left:376px;top:47px;" width="10" height="10" viewBox="0 0 10 10"><rect x="1.2" y="2.6" width="5.2" height="0.8" fill="#8a8a8a"/><rect x="0" y="4.8" width="7.6" height="0.8" fill="#8a8a8a"/></svg>
<div style="left:387px;top:43.5px;width:0.7px;height:12.5px;background:#e0e0e0;"></div>
<svg style="left:390.6px;top:44.8px;" width="10" height="9.6" viewBox="0 0 10 9.6"><text transform="rotate(-42 3.2 6.2)" x="0.6" y="6.4" font-size="5.6" fill="#5a5a5a" font-family="Liberation Sans,sans-serif">ab</text><path d="M4 9.2L8.8 4.6M8.9 4.5l-1.7 0.2M8.9 4.5l-0.2 1.7" stroke="#7a7a7a" stroke-width="0.6" fill="none"/></svg>
<svg style="left:402.2px;top:49.2px;" width="3.2" height="2.2" viewBox="0 0 3.2 2.2"><polygon points="0.3,0.3 2.9,0.3 1.6,1.8" fill="#7a7a7a"/></svg>
<div style="left:416.2px;top:42.5px;width:0.7px;height:31.5px;background:#dedede;"></div>
<svg style="left:421.6px;top:44.8px;" width="9" height="9.6" viewBox="0 0 9 9.6"><text x="0.6" y="4" font-size="5" fill="#555" font-family="Liberation Sans,sans-serif">ab</text><text x="0.8" y="8.6" font-size="5" fill="#555" font-family="Liberation Sans,sans-serif">c</text><path d="M6.8 4.6v2.2H4M5.1 5.7L3.9 6.8L5.1 7.9" stroke="#3f7fd0" stroke-width="0.8" fill="none"/></svg>
<span class="t" id="t187" style="left:431.6px;top:45.15px;font-size:7.2px;line-height:10.1px;color:#333333;transform:scaleX(0.8414);">折り返して全体を表示する</span>
<svg style="left:349.4px;top:62px;" width="10" height="10" viewBox="0 0 10 10"><rect x="0" y="0.8" width="7.4" height="0.8" fill="#8a8a8a"/><rect x="0" y="2.8" width="5" height="0.8" fill="#8a8a8a"/><rect x="0" y="4.8" width="7.4" height="0.8" fill="#8a8a8a"/><rect x="0" y="6.8" width="5" height="0.8" fill="#8a8a8a"/></svg>
<svg style="left:362.9px;top:62px;" width="10" height="10" viewBox="0 0 10 10"><rect x="0" y="0.8" width="7.4" height="0.8" fill="#8a8a8a"/><rect x="1.2" y="2.8" width="5" height="0.8" fill="#8a8a8a"/><rect x="0" y="4.8" width="7.4" height="0.8" fill="#8a8a8a"/><rect x="1.2" y="6.8" width="5" height="0.8" fill="#8a8a8a"/></svg>
<svg style="left:376.3px;top:62px;" width="10" height="10" viewBox="0 0 10 10"><rect x="0" y="0.8" width="7.4" height="0.8" fill="#8a8a8a"/><rect x="2.4" y="2.8" width="5" height="0.8" fill="#8a8a8a"/><rect x="0" y="4.8" width="7.4" height="0.8" fill="#8a8a8a"/><rect x="2.4" y="6.8" width="5" height="0.8" fill="#8a8a8a"/></svg>
<div style="left:387px;top:60.5px;width:0.7px;height:12.5px;background:#e0e0e0;"></div>
<svg style="left:390.8px;top:62px;" width="9" height="9.4" viewBox="0 0 9 9.4"><path d="M0.2 0.9h8.4" stroke="#c4c4c4" stroke-width="0.8"/><path d="M4.8 3h3.8M4.8 5.4h3.8" stroke="#b0b0b0" stroke-width="0.8"/><path d="M0.2 8.3h8.4" stroke="#7a7a7a" stroke-width="0.8"/><polygon points="0.2,4.5 2.4,2.3 2.4,3.7 4.4,3.7 4.4,5.3 2.4,5.3 2.4,6.7" fill="#3f78c2"/></svg>
<svg style="left:404px;top:62px;" width="9" height="9.4" viewBox="0 0 9 9.4"><path d="M0.2 0.9h8.4" stroke="#c4c4c4" stroke-width="0.8"/><path d="M4.8 3h3.8M4.8 5.4h3.8" stroke="#b0b0b0" stroke-width="0.8"/><path d="M0.2 8.3h8.4" stroke="#7a7a7a" stroke-width="0.8"/><polygon points="4.4,4.5 2.2,2.3 2.2,3.7 0.2,3.7 0.2,5.3 2.2,5.3 2.2,6.7" fill="#3f78c2"/></svg>
<svg style="left:420.6px;top:62px;" width="10" height="9.6" viewBox="0 0 10 9.6"><rect x="0.5" y="0.5" width="8.8" height="8.4" fill="#fff" stroke="#adadad" stroke-width="0.65"/><rect x="0.9" y="3.2" width="8" height="3" fill="#dde9f7"/><path d="M0.5 3h8.8M0.5 6.4h8.8M4.9 0.5v2.5M4.9 6.4v2.5" stroke="#a8a8a8" stroke-width="0.5"/><path d="M2 4.7h5.8M3 3.9l-1 0.8l1 0.8M6.8 3.9l1 0.8l-1 0.8" stroke="#5b93d3" stroke-width="0.6" fill="none"/></svg>
<span class="t" id="t188" style="left:431.6px;top:62.65px;font-size:7.2px;line-height:10.1px;color:#333333;transform:scaleX(0.8496);">セルを結合して中央揃え</span>
<svg style="left:504.6px;top:66.5px;" width="3.2" height="2.2" viewBox="0 0 3.2 2.2"><polygon points="0.3,0.3 2.9,0.3 1.6,1.8" fill="#7a7a7a"/></svg>
<div style="left:520px;top:43px;width:76px;height:13.4px;background:#fff;border:0.6px solid #d6d6d6;box-sizing:border-box;"></div>
<span class="t" id="t189" style="left:521.8px;top:45.15px;font-size:7.2px;line-height:10.1px;color:#333333;transform:scaleX(0.9590);">標準</span>
<svg style="left:589.6px;top:48.8px;" width="3.2" height="2.2" viewBox="0 0 3.2 2.2"><polygon points="0.3,0.3 2.9,0.3 1.6,1.8" fill="#666"/></svg>
<svg style="left:521.6px;top:62.4px;" width="10.5" height="9" viewBox="0 0 10.5 9"><rect x="0.4" y="0.6" width="8.4" height="4.8" fill="#3f78c2"/><rect x="1.8" y="1.8" width="5.6" height="2.4" fill="#dfe9f6"/><circle cx="4.6" cy="3" r="1" fill="#3f78c2"/><path d="M3.4 7.6c2-1.8 4-1.8 5.4-0.6" stroke="#e8b25a" stroke-width="1.3" fill="none"/></svg>
<svg style="left:535.2px;top:66.5px;" width="3.2" height="2.2" viewBox="0 0 3.2 2.2"><polygon points="0.3,0.3 2.9,0.3 1.6,1.8" fill="#7a7a7a"/></svg>
<span class="t" id="t190" style="left:543.6px;top:59.9px;font-size:10px;line-height:14px;color:#555;transform:scaleX(0.9207);">%</span>
<span class="t" id="t191" style="left:559.2px;top:55.1px;font-size:13px;line-height:18.2px;color:#333;font-weight:700;transform:scaleX(1.0462);font-family:&quot;Liberation Serif&quot;,serif;">,</span>
<div style="left:568.9px;top:60.5px;width:0.7px;height:12.5px;background:#dedede;"></div>
<svg style="left:572.2px;top:62px;" width="9.4" height="9.4" viewBox="0 0 9.4 9.4"><text x="3.6" y="4" font-size="4.7" fill="#333" font-family="Liberation Sans,sans-serif">.0</text><text x="1.4" y="8.6" font-size="4.7" fill="#333" font-family="Liberation Sans,sans-serif">.00</text><path d="M3 2.4H0.6M1.6 1.4l-1 1l1 1" stroke="#2f6fbe" stroke-width="0.7" fill="none"/></svg>
<svg style="left:585.4px;top:62px;" width="9.4" height="9.4" viewBox="0 0 9.4 9.4"><text x="3.6" y="4" font-size="4.7" fill="#333" font-family="Liberation Sans,sans-serif">.00</text><text x="3.2" y="8.6" font-size="4.7" fill="#333" font-family="Liberation Sans,sans-serif">.0</text><path d="M0.6 6.8H3M2 5.8l1 1l-1 1" stroke="#2f6fbe" stroke-width="0.7" fill="none"/></svg>
<svg style="left:611px;top:40.6px;" width="17.5" height="17.5" viewBox="0 0 17.5 17.5"><rect x="0.6" y="0.6" width="14.6" height="12" fill="#fff" stroke="#8a8a8a" stroke-width="0.7"/><path d="M5.4 0.6v12M10.2 0.6v12M0.6 3.6h14.6M0.6 6.6h14.6M0.6 9.6h14.6" stroke="#8a8a8a" stroke-width="0.6"/><rect x="5.4" y="0.6" width="2" height="3" fill="#e04b3a"/><rect x="5.4" y="3.6" width="3.6" height="3" fill="#3f78c2"/><rect x="5.4" y="6.6" width="2.6" height="3" fill="#e04b3a"/><rect x="9.6" y="9.6" width="6.6" height="6.6" fill="#fff" stroke="#666" stroke-width="0.7"/><path d="M11.4 13h3.2M12.2 14.6l1.8-3.2" stroke="#444" stroke-width="0.6"/></svg>
<span class="t" id="t192" style="left:606.45px;top:59.15px;font-size:7.2px;line-height:10.1px;color:#333333;transform:scaleX(0.8865);">条件付き</span>
<span class="t" id="t193" style="left:609.5px;top:68.05px;font-size:7.2px;line-height:10.1px;color:#333333;transform:scaleX(0.9451);">書式</span>
<svg style="left:625.8px;top:72.3px;" width="3.2" height="2.2" viewBox="0 0 3.2 2.2"><polygon points="0.3,0.3 2.9,0.3 1.6,1.8" fill="#7a7a7a"/></svg>
<svg style="left:644.5px;top:40.6px;" width="19" height="17.5" viewBox="0 0 19 17.5"><rect x="1" y="1" width="15.5" height="13.2" fill="#fff" stroke="#9a9a9a" stroke-width="0.7"/><rect x="5.4" y="4.2" width="11.1" height="10" fill="#b4cdeb"/><path d="M5.4 1v13.2M9.1 1v13.2M12.8 1v13.2M1 4.2h15.5M1 7.5h15.5M1 10.8h15.5" stroke="#b0b0b0" stroke-width="0.5"/><path d="M18.1 5.2L12 12.4" stroke="#6a6a6a" stroke-width="1.7"/><path d="M12.6 11.4l-1.4 1.8" stroke="#c9c9c9" stroke-width="1.7"/><polygon points="9.8,12.6 6,16.6 13,16.6" fill="#3b82c8"/><path d="M10.2 12.4l2.2 2.6" stroke="#e8f1fb" stroke-width="0.9"/></svg>
<span class="t" id="t194" style="left:634.05px;top:59.15px;font-size:7.2px;line-height:10.1px;color:#333333;transform:scaleX(0.7751);">テーブルとして</span>
<span class="t" id="t195" style="left:636.8px;top:68.05px;font-size:7.2px;line-height:10.1px;color:#333333;transform:scaleX(0.9178);">書式設定</span>
<svg style="left:666.6px;top:72.3px;" width="3.2" height="2.2" viewBox="0 0 3.2 2.2"><polygon points="0.3,0.3 2.9,0.3 1.6,1.8" fill="#7a7a7a"/></svg>
<svg style="left:680px;top:40.6px;" width="19" height="17.5" viewBox="0 0 19 17.5"><rect x="0.6" y="0.7" width="15.2" height="12.2" fill="#fff" stroke="#9a9a9a" stroke-width="0.7"/><rect x="3" y="3.4" width="9.8" height="7.2" fill="#b4cdeb"/><path d="M17.2 4.4L11 12.2" stroke="#6a6a6a" stroke-width="1.7"/><path d="M11.6 11.2l-1.4 1.8" stroke="#c9c9c9" stroke-width="1.7"/><polygon points="8.4,12.8 4.8,16.6 11.8,16.6" fill="#3b82c8"/><path d="M8.8 12.8l2.2 2.4" stroke="#e8f1fb" stroke-width="0.9"/></svg>
<span class="t" id="t196" style="left:679.85px;top:59.15px;font-size:7.2px;line-height:10.1px;color:#333333;transform:scaleX(0.8110);">セルの</span>
<span class="t" id="t197" style="left:674.2px;top:68.05px;font-size:7.2px;line-height:10.1px;color:#333333;transform:scaleX(0.7370);">スタイル</span>
<svg style="left:697.7px;top:72.3px;" width="3.2" height="2.2" viewBox="0 0 3.2 2.2"><polygon points="0.3,0.3 2.9,0.3 1.6,1.8" fill="#7a7a7a"/></svg>
<svg style="left:716px;top:40.8px;" width="17.5" height="17" viewBox="0 0 17.5 17"><g fill="#fff" stroke="#8a8a8a" stroke-width="0.6"><rect x="0.8" y="0.6" width="4" height="3.4"/><rect x="4.8" y="0.6" width="4" height="3.4"/><rect x="0.8" y="10" width="4" height="3.2"/><rect x="4.8" y="10" width="4" height="3.2"/><rect x="0.8" y="13.2" width="4" height="3.2"/><rect x="4.8" y="13.2" width="4" height="3.2"/></g><rect x="8.6" y="5" width="8" height="3.8" fill="#c5d9f1" stroke="#6d93c9" stroke-width="0.6"/><path d="M7 6.9H0.8M3 4.6L0.7 6.9L3 9.2" stroke="#2f6fbe" stroke-width="0.9" fill="none"/></svg>
<span class="t" id="t198" style="left:717.6px;top:59.15px;font-size:7.2px;line-height:10.1px;color:#333333;transform:scaleX(0.9451);">挿入</span>
<svg style="left:722.8px;top:72.3px;" width="3.2" height="2.2" viewBox="0 0 3.2 2.2"><polygon points="0.3,0.3 2.9,0.3 1.6,1.8" fill="#7a7a7a"/></svg>
<svg style="left:740px;top:40.8px;" width="17.5" height="17" viewBox="0 0 17.5 17"><g fill="#fff" stroke="#8a8a8a" stroke-width="0.6"><rect x="0.8" y="0.6" width="4" height="3.4"/><rect x="4.8" y="0.6" width="4" height="3.4"/><rect x="0.8" y="10" width="4" height="3.2"/><rect x="4.8" y="10" width="4" height="3.2"/><rect x="0.8" y="13.2" width="4" height="3.2"/><rect x="4.8" y="13.2" width="4" height="3.2"/></g><rect x="4.6" y="5" width="5" height="3.6" fill="#c5d9f1" stroke="#6d93c9" stroke-width="0.6"/><path d="M9.6 3.4l6.6 6.6M16.2 3.4l-6.6 6.6" stroke="#e0522e" stroke-width="1" fill="none"/></svg>
<span class="t" id="t199" style="left:741.4px;top:59.15px;font-size:7.2px;line-height:10.1px;color:#333333;transform:scaleX(0.9451);">削除</span>
<svg style="left:746.6px;top:72.3px;" width="3.2" height="2.2" viewBox="0 0 3.2 2.2"><polygon points="0.3,0.3 2.9,0.3 1.6,1.8" fill="#7a7a7a"/></svg>
<svg style="left:763.5px;top:40.2px;" width="17.5" height="17.5" viewBox="0 0 17.5 17.5"><rect x="0.8" y="3.8" width="15.4" height="11.8" fill="#fff" stroke="#a0a0a0" stroke-width="0.6"/><path d="M4.6 3.8v11.8M9 3.8v11.8M12.8 3.8v11.8M0.8 6.8h15.4M0.8 12.6h15.4" stroke="#b4b4b4" stroke-width="0.55"/><rect x="4.8" y="7" width="4.2" height="5.6" fill="#3f78c2"/><rect x="1" y="13.4" width="15" height="2" fill="#e2e2e2"/><path d="M0.8 0.2v2.6M13 0.2v2.6M2 1.5h9.8M3.4 0.3L2 1.5l1.4 1.2M10.4 0.3l1.4 1.2l-1.4 1.2" stroke="#2f6fbe" stroke-width="0.75" fill="none"/></svg>
<span class="t" id="t200" style="left:765.8px;top:59.15px;font-size:7.2px;line-height:10.1px;color:#333333;transform:scaleX(0.9451);">書式</span>
<svg style="left:771px;top:72.3px;" width="3.2" height="2.2" viewBox="0 0 3.2 2.2"><polygon points="0.3,0.3 2.9,0.3 1.6,1.8" fill="#7a7a7a"/></svg>
<span class="t" id="t201" style="left:795.2px;top:37.45px;font-size:10.5px;line-height:14.7px;color:#444;transform:scaleX(1.0154);">Σ</span>
<span class="t" id="t202" style="left:805.6px;top:39.95px;font-size:7.9px;line-height:11.1px;color:#333333;transform:scaleX(0.7464);">オート SUM</span>
<svg style="left:844.6px;top:44.8px;" width="3.2" height="2.2" viewBox="0 0 3.2 2.2"><polygon points="0.3,0.3 2.9,0.3 1.6,1.8" fill="#7a7a7a"/></svg>
<svg style="left:794.8px;top:53.2px;" width="8" height="9.4" viewBox="0 0 8 9.4"><rect x="0.5" y="0.5" width="7" height="8.4" fill="#fff" stroke="#777" stroke-width="0.7"/><path d="M0.5 2.2h7" stroke="#777" stroke-width="0.6"/><path d="M4 3v3" stroke="#2f6fbe" stroke-width="1.6" fill="none"/><polygon points="1.8,5.2 6.2,5.2 4,7.8" fill="#2f6fbe"/></svg>
<span class="t" id="t203" style="left:805.6px;top:52.85px;font-size:7.9px;line-height:11.1px;color:#333333;transform:scaleX(0.5613);">フィル</span>
<svg style="left:822.4px;top:57.6px;" width="3.2" height="2.2" viewBox="0 0 3.2 2.2"><polygon points="0.3,0.3 2.9,0.3 1.6,1.8" fill="#7a7a7a"/></svg>
<svg style="left:794.6px;top:67.2px;" width="9" height="8" viewBox="0 0 9 8"><path d="M5.2 0.4l3.4 2.8l-4.2 4.4h-2.2l-1.8-1.5z" fill="#ee7788"/><path d="M2.2 7.6l-1.8-1.5l1.9-2.1l2.4 2z" fill="#f7bcc4"/></svg>
<span class="t" id="t204" style="left:805.6px;top:65.75px;font-size:7.9px;line-height:11.1px;color:#333333;transform:scaleX(0.5573);">クリア</span>
<svg style="left:822.4px;top:70.4px;" width="3.2" height="2.2" viewBox="0 0 3.2 2.2"><polygon points="0.3,0.3 2.9,0.3 1.6,1.8" fill="#7a7a7a"/></svg>
<svg style="left:858.8px;top:40.8px;" width="18" height="17" viewBox="0 0 18 17"><text x="0.4" y="7.4" font-size="8.4" fill="#3f78c2" font-family="Liberation Sans,sans-serif">A</text><text x="0.8" y="15.6" font-size="8.4" fill="#8a5cb8" font-family="Liberation Sans,sans-serif">Z</text><path d="M8.4 3.4h8.8l-3.4 4v5.4l-2 -1.2v-4.2z" fill="#6a6a6a"/></svg>
<span class="t" id="t205" style="left:853.45px;top:59.15px;font-size:7.2px;line-height:10.1px;color:#333333;transform:scaleX(0.8205);">並べ替えと</span>
<span class="t" id="t206" style="left:851.8px;top:68.05px;font-size:7.2px;line-height:10.1px;color:#333333;transform:scaleX(0.6984);">フィルター</span>
<svg style="left:879.7px;top:72.3px;" width="3.2" height="2.2" viewBox="0 0 3.2 2.2"><polygon points="0.3,0.3 2.9,0.3 1.6,1.8" fill="#7a7a7a"/></svg>
<svg style="left:888.8px;top:40.8px;" width="17" height="17" viewBox="0 0 17 17"><circle cx="10.2" cy="5.8" r="4.6" fill="none" stroke="#3f78c2" stroke-width="1.5"/><path d="M6.8 9.2L1.2 14.8" stroke="#3f78c2" stroke-width="2"/></svg>
<span class="t" id="t207" style="left:888.5px;top:59.15px;font-size:7.2px;line-height:10.1px;color:#333333;transform:scaleX(0.8064);">検索と</span>
<span class="t" id="t208" style="left:886.6px;top:68.05px;font-size:7.2px;line-height:10.1px;color:#333333;transform:scaleX(0.9312);">選択</span>
<svg style="left:903.6px;top:72.3px;" width="3.2" height="2.2" viewBox="0 0 3.2 2.2"><polygon points="0.3,0.3 2.9,0.3 1.6,1.8" fill="#7a7a7a"/></svg>
<svg style="left:932.4px;top:83.6px;" width="7" height="4.6" viewBox="0 0 7 4.6"><path d="M0.6 4L3.5 1L6.4 4" stroke="#555" stroke-width="0.85" fill="none"/></svg>
<div style="left:83.2px;top:96.2px;width:58.2px;height:15.2px;background:#fff;"></div>
<span class="t" id="t209" style="left:85px;top:98.8px;font-size:8.6px;line-height:12px;color:#555;transform:scaleX(0.9532);">J11</span>
<svg style="left:135.2px;top:102.4px;" width="3.2" height="2.2" viewBox="0 0 3.2 2.2"><polygon points="0.3,0.3 2.9,0.3 1.6,1.8" fill="#777"/></svg>
<div style="left:150px;top:100.4px;width:0.9px;height:0.9px;background:#9a9a9a;"></div>
<div style="left:150px;top:102.8px;width:0.9px;height:0.9px;background:#9a9a9a;"></div>
<div style="left:150px;top:105.2px;width:0.9px;height:0.9px;background:#9a9a9a;"></div>
<div style="left:159.5px;top:96.2px;width:62px;height:15.2px;background:#fff;"></div>
<svg style="left:166.6px;top:100.6px;" width="6.4" height="6.4" viewBox="0 0 6.4 6.4"><path d="M0.5 0.5L5.9 5.9M5.9 0.5L0.5 5.9" stroke="#a8a8a8" stroke-width="0.8"/></svg>
<svg style="left:186.4px;top:100.6px;" width="7.6" height="6.4" viewBox="0 0 7.6 6.4"><path d="M0.5 3.4L2.7 5.7L7 0.6" stroke="#a8a8a8" stroke-width="0.85" fill="none"/></svg>
<span class="t" id="t210" style="left:207.6px;top:99px;font-size:7.4px;line-height:10.4px;color:#8a8a8a;transform:scaleX(1.2488);font-family:&quot;Liberation Serif&quot;,serif;"><i>f</i>x</span>
<div style="left:223.8px;top:96.2px;width:716.8px;height:15.2px;background:#fff;"></div>
<svg style="left:933px;top:101.8px;" width="6" height="4" viewBox="0 0 6 4"><path d="M0.6 0.6L3 3L5.4 0.6" stroke="#555" stroke-width="1" fill="none"/></svg>
<div style="left:80px;top:528px;width:864px;height:0.8px;background:#cfcfcf;"></div>
<svg style="left:90.2px;top:531.4px;" width="4" height="5.4" viewBox="0 0 4 5.4"><polygon points="3.4,0.4 3.4,5 0.6,2.7" fill="#c2c2c2"/></svg>
<svg style="left:102px;top:531.4px;" width="4" height="5.4" viewBox="0 0 4 5.4"><polygon points="0.6,0.4 0.6,5 3.4,2.7" fill="#c2c2c2"/></svg>
<div style="left:121.6px;top:528px;width:38px;height:10.6px;background:#ffffff;"></div>
<div style="left:121.6px;top:538.1px;width:38px;height:1px;background:#4f9672;"></div>
<span class="t" id="t211" style="left:127.3px;top:527.55px;font-size:8.2px;line-height:11.5px;color:#2f7d57;transform:scaleX(0.9710);">Sheet1</span>
<svg style="left:171.8px;top:529.9px;" width="9.6" height="9.6" viewBox="0 0 9.6 9.6"><circle cx="4.8" cy="4.8" r="4" fill="none" stroke="#777" stroke-width="0.7"/><path d="M2.8 4.8h4M4.8 2.8v4" stroke="#777" stroke-width="0.7"/></svg>
<div style="left:596.3px;top:531px;width:0.9px;height:0.9px;background:#9a9a9a;"></div>
<div style="left:596.3px;top:533.4px;width:0.9px;height:0.9px;background:#9a9a9a;"></div>
<div style="left:596.3px;top:535.8px;width:0.9px;height:0.9px;background:#9a9a9a;"></div>
<div style="left:604px;top:529.6px;width:8.4px;height:9px;background:#fff;border:0.5px solid #cdcdcd;box-sizing:border-box;"></div>
<svg style="left:604px;top:529.6px;" width="8.4" height="9" viewBox="0 0 8.4 9"><polygon points="5.4,2.6 5.4,6.4 3,4.5" fill="#555"/></svg>
<div style="left:612.6px;top:529.6px;width:295px;height:9px;background:#fff;border:0.5px solid #cdcdcd;box-sizing:border-box;"></div>
<div style="left:907.6px;top:529.6px;width:16.2px;height:9px;background:#dcdcdc;"></div>
<div style="left:923.8px;top:529.6px;width:8.6px;height:9px;background:#fff;border:0.5px solid #cdcdcd;box-sizing:border-box;"></div>
<svg style="left:923.8px;top:529.6px;" width="8.6" height="9" viewBox="0 0 8.6 9"><polygon points="3.2,2.6 3.2,6.4 5.6,4.5" fill="#555"/></svg>
<div style="left:80px;top:540.2px;width:864px;height:0.7px;background:#e0e0e0;"></div>
<span class="t" id="t212" style="left:84.3px;top:542.35px;font-size:6.9px;line-height:9.7px;color:#444;transform:scaleX(0.9868);">準備完了</span>
<svg style="left:720.8px;top:542.8px;" width="9.4" height="8.6" viewBox="0 0 9.4 8.6"><rect x="0.4" y="0.4" width="7.6" height="5.2" fill="#4c4c4c"/><rect x="2.8" y="5.6" width="2.4" height="1.4" fill="#4c4c4c"/><rect x="1.6" y="7" width="4.4" height="0.8" fill="#4c4c4c"/><circle cx="7" cy="6.2" r="2.1" fill="#444" stroke="#f3f3f3" stroke-width="0.6"/></svg>
<span class="t" id="t213" style="left:731.5px;top:542.35px;font-size:6.9px;line-height:9.7px;color:#444;transform:scaleX(0.9868);">表示設定</span>
<div style="left:769.8px;top:541.2px;width:21.6px;height:11.8px;background:#c8c8c8;"></div>
<svg style="left:776.2px;top:543.3px;" width="8.6" height="7.6" viewBox="0 0 8.6 7.6"><rect x="0.4" y="0.4" width="7.6" height="6.6" fill="none" stroke="#666" stroke-width="0.7"/><path d="M0.4 2.6h7.6M0.4 4.8h7.6M3 0.4v6.6M5.5 0.4v6.6" stroke="#777" stroke-width="0.55"/></svg>
<svg style="left:799px;top:543.3px;" width="8.6" height="7.6" viewBox="0 0 8.6 7.6"><rect x="0.4" y="0.4" width="7.6" height="6.6" fill="none" stroke="#777" stroke-width="0.7"/><rect x="2.2" y="1.8" width="4" height="5.2" fill="none" stroke="#888" stroke-width="0.55"/></svg>
<svg style="left:821.8px;top:543.3px;" width="8.6" height="7.6" viewBox="0 0 8.6 7.6"><rect x="0.4" y="0.4" width="7.6" height="6.6" fill="none" stroke="#777" stroke-width="0.7"/><path d="M0.4 4h3.6V0.4" stroke="#888" stroke-width="0.55" fill="none"/></svg>
<div style="left:840.8px;top:547px;width:3.6px;height:0.8px;background:#666;"></div>
<div style="left:848.8px;top:547.1px;width:56.4px;height:0.7px;background:#b0b0b0;"></div>
<div style="left:875.2px;top:543.2px;width:3.1px;height:8.2px;background:#4a4a4a;"></div>
<svg style="left:908.8px;top:545px;" width="4.6" height="4.6" viewBox="0 0 4.6 4.6"><path d="M0.2 2.3h4.2M2.3 0.2v4.2" stroke="#666" stroke-width="0.8"/></svg>
<span class="t" id="t214" style="left:920.6px;top:541.55px;font-size:8.2px;line-height:11.5px;color:#4a4a4a;transform:scaleX(0.9259);">100%</span>
<div style="left:80px;top:553.2px;width:864px;height:22.8px;background:linear-gradient(90deg,#1c3542 0%,#1c2f3e 40%,#1b2a42 100%);"></div>
<svg style="left:89px;top:560px;" width="9.6" height="9" viewBox="0 0 9.6 9"><path d="M0 1.3l3.9-0.55v3.5H0zM4.4 0.68L9.6 0v4.25H4.4zM0 4.75h3.9v3.5L0 7.7zM4.4 4.75h5.2V9l-5.2-0.68z" fill="#fff"/></svg>
<div style="left:107.5px;top:553.2px;width:197.4px;height:22.8px;background:#f1f1f1;"></div>
<svg style="left:114.2px;top:559.2px;" width="10" height="10.4" viewBox="0 0 10 10.4"><circle cx="6" cy="4" r="3.2" fill="none" stroke="#333" stroke-width="1"/><path d="M3.8 6.4L0.6 9.8" stroke="#333" stroke-width="1.1"/></svg>
<span class="t" id="t215" style="left:130.4px;top:559.3px;font-size:8.4px;line-height:11.8px;color:#3a3a3a;transform:scaleX(0.8732);">ここに入力して検索</span>
<svg style="left:313.4px;top:559.6px;" width="10.4" height="10.4" viewBox="0 0 10.4 10.4"><circle cx="5.2" cy="5.2" r="3.7" fill="none" stroke="#fff" stroke-width="1.15"/></svg>
<svg style="left:340.8px;top:560px;" width="11" height="9.4" viewBox="0 0 11 9.4"><rect x="2.4" y="1.4" width="5" height="6.4" fill="none" stroke="#d8d8d8" stroke-width="0.8"/><path d="M0.6 1.8v5.6M9.6 1v2.2M9.6 5.2v3.2" stroke="#d8d8d8" stroke-width="0.8"/><path d="M2.4 3.2h5M2.4 6h5" stroke="#d8d8d8" stroke-width="0.6"/></svg>
<svg style="left:369.4px;top:559px;" width="13" height="11" viewBox="0 0 13 11"><path d="M0.4 1.4h4.2l1 1.2h6.9v7.8H0.4z" fill="#f7c749"/><path d="M0.4 4h12.1v6.4H0.4z" fill="#fbd96c"/><rect x="3.4" y="6.8" width="6" height="3.6" fill="#3f8ad6"/><rect x="4.6" y="8.2" width="3.6" height="2.2" fill="#fbd96c"/></svg>
<svg style="left:398.6px;top:558.6px;" width="12.6" height="12.2" viewBox="0 0 12.6 12.2"><rect x="0" y="0" width="12.6" height="12.2" fill="#1b6fc4"/><path d="M0 12.2V8.4l4.2-4.2l4.6 4.8l1.8-1.6l2 1.9v2.9z" fill="#0b4f9c"/><path d="M0 12.2l4.2-5l5 5z" fill="#3a96e8"/><path d="M8.6 2.2l0.5 1.1l1.1 0.5l-1.1 0.5l-0.5 1.1l-0.5-1.1l-1.1-0.5l1.1-0.5z" fill="#fff"/></svg>
<svg style="left:426.8px;top:557.4px;" width="13" height="14" viewBox="0 0 13 14"><path d="M4 4.2V2.6a2.5 2.2 0 0 1 5 0v1.6" fill="none" stroke="#e8e8e8" stroke-width="0.9"/><rect x="0.4" y="4" width="12.2" height="9.4" fill="#f4f4f4"/><rect x="4.3" y="6.4" width="2" height="2" fill="#f25022"/><rect x="6.7" y="6.4" width="2" height="2" fill="#7fba00"/><rect x="4.3" y="8.8" width="2" height="2" fill="#00a4ef"/><rect x="6.7" y="8.8" width="2" height="2" fill="#ffb900"/></svg>
<svg style="left:455.4px;top:557.8px;" width="14" height="14" viewBox="0 0 14 14"><defs><linearGradient id="eg" x1="0" y1="0" x2="1" y2="1"><stop offset="0" stop-color="#35c1b1"/><stop offset="0.55" stop-color="#1f9de0"/><stop offset="1" stop-color="#0c59a4"/></linearGradient></defs><circle cx="7" cy="7" r="6.6" fill="url(#eg)"/><path d="M13.4 6.4c-0.8-3.4-3.4-5.6-6.6-5.6c-2.4 0-4.6 1.2-5.6 3.4c2-1.6 5.6-1.8 7.4 0.4c0.8 1 0.6 2 0.2 2.6z" fill="#4cd07a" opacity="0.9"/><path d="M4.8 6.8c-0.6 2.2 0.6 4.6 3.4 5.2c1.6 0.3 3-0.2 3.8-0.8c-2 0.2-4-0.8-4-2.8c0-0.8 0.4-1.4 0.8-1.8z" fill="#1c2f3e"/></svg>
<svg style="left:483.4px;top:557.8px;" width="14" height="14" viewBox="0 0 14 14"><path d="M4.6 1.2l8.4 1.2l-2.6 10.4l-9-2z" fill="#9db7cc"/><path d="M5.4 2.4l6.4 1l-2.1 8l-6.7-1.5z" fill="#dfeaf2"/><path d="M1.4 10.8l9 2l0.3-1.2l-9-2z" fill="#6d8aa3"/></svg>
<div style="left:512.8px;top:558px;width:13.4px;height:13.4px;background:#fff200;border-radius:50%;"></div>
<div style="left:508px;top:574.6px;width:23.2px;height:1.4px;background:#9fc6ec;"></div>
<svg style="left:541.4px;top:558px;" width="14" height="14" viewBox="0 0 14 14"><path d="M7 0.6l1.5 4.3l4.6-0.6l-3.6 2.9l2 4.5l-4.5-2.7l-4.4 2.7l2-4.5L1 4.3l4.6 0.6z" fill="#4a67c8"/><path d="M7 2.4l0.9 3l2.6 0.2l-2.1 1.6l0.9 2.6L7 8.2z" fill="#e8edfb"/><path d="M8.2 6.2v6.6l1.6-1.5l1.1 2.3l1-0.5l-1.1-2.2h2.1z" fill="#fff" stroke="#222" stroke-width="0.45"/></svg>
<svg style="left:570px;top:559px;" width="14.4" height="12" viewBox="0 0 14.4 12"><path d="M0.4 4.4L7.2 0.4l6.8 4v7.2H0.4z" fill="#1a78d0"/><path d="M0.4 4.6l6.8 4.6l6.8-4.6" fill="#4aa3ee"/><path d="M0.4 4.6l6.8 4.8l6.8-4.8v0.9l-6.8 4.8l-6.8-4.8z" fill="#e9f3fc"/></svg>
<div style="left:599px;top:574.6px;width:18.6px;height:1.4px;background:#9fc6ec;"></div>
<svg style="left:599.6px;top:557.6px;" width="13.6" height="13.6" viewBox="0 0 13.6 13.6"><rect x="0" y="0" width="13.6" height="13.6" rx="1.4" fill="#2a3236"/><path d="M4 8.6l3.6-3.6l2.4 2.4l-3.6 3.6z" fill="#3fd6c0"/><path d="M5.2 3.2l2.4-0.6l-0.6 2.4z" fill="#fff"/></svg>
<div style="left:621px;top:553.2px;width:28px;height:22.8px;background:#3c4b58;"></div>
<div style="left:621px;top:574.6px;width:28px;height:1.4px;background:#9fc6ec;"></div>
<svg style="left:627.6px;top:557.8px;" width="14.4" height="13.6" viewBox="0 0 14.4 13.6"><rect x="4.6" y="0.6" width="9.4" height="12.4" rx="0.8" fill="#21a366"/><rect x="9.2" y="0.6" width="4.8" height="4.1" fill="#33c481"/><rect x="9.2" y="4.7" width="4.8" height="4.1" fill="#107c41"/><rect x="9.2" y="8.8" width="4.8" height="4.2" fill="#185c37"/><rect x="4.6" y="8.8" width="4.6" height="4.2" fill="#185c37"/><rect x="0.4" y="3.2" width="7.4" height="7.4" rx="0.7" fill="#107c41"/><text x="2.2" y="8.9" font-size="5.6" font-weight="700" fill="#fff" font-family="Liberation Sans,sans-serif">x</text></svg>
<div style="left:652.4px;top:574.6px;width:23.4px;height:1.4px;background:#9fc6ec;"></div>
<svg style="left:655px;top:558px;" width="15" height="14" viewBox="0 0 15 14"><rect x="0.6" y="0.8" width="10" height="8" rx="1.4" fill="#35a9c9"/><path d="M10.6 3.4l3.6-2v7l-3.6-2z" fill="#35a9c9"/><circle cx="5.6" cy="4.8" r="2.6" fill="#fff"/><circle cx="5.6" cy="4.8" r="1.7" fill="#e23b3b"/><path d="M5.6 8.8v3M3.2 12.2h4.8" stroke="#35a9c9" stroke-width="0.9"/></svg>
<svg style="left:708.8px;top:562.4px;" width="7.2" height="4.6" viewBox="0 0 7.2 4.6"><path d="M0.5 4L3.6 0.8L6.7 4" fill="none" stroke="#e6e6e6" stroke-width="0.8"/></svg>
<svg style="left:725.6px;top:560.4px;" width="9" height="8" viewBox="0 0 9 8"><path d="M0.4 2.8h1.8l2.2-2v6.4l-2.2-2H0.4z" fill="none" stroke="#ddd" stroke-width="0.7"/><path d="M5.6 2.4c0.8 0.8 0.8 2.4 0 3.2M6.8 1.2c1.6 1.6 1.6 4 0 5.6" fill="none" stroke="#ddd" stroke-width="0.6"/></svg>
<svg style="left:748px;top:559px;" width="72" height="12" viewBox="0 0 72 12"><circle cx="6" cy="5" r="3.4" fill="none" stroke="#a9b3bd" stroke-width="0.8"/><rect x="22" y="2.4" width="7" height="5" fill="#c9d0d6"/><circle cx="39.6" cy="7" r="1.6" fill="#e0463c"/><path d="M46 2.6h8.6l-4.3 5.6z" fill="none" stroke="#c0c7ce" stroke-width="0.8"/></svg>
<svg style="left:820.6px;top:559.8px;" width="9" height="10" viewBox="0 0 9 10"><path d="M0.8 8.8l5-7.4l2 1.3l-5 7.4l-2.4 0.8z" fill="#cdd3d9"/></svg>
<span class="t" id="t216" style="left:740.8px;top:556.2px;font-size:13.4px;line-height:18.8px;color:#f2f2f2;transform:scaleX(0.9988);text-shadow:0 0 1.2px rgba(20,30,45,0.9);">©&nbsp;2021&nbsp;saym</span>
<span class="t" id="t217" style="left:838.6px;top:558.7px;font-size:9.6px;line-height:13.4px;color:#f0f0f0;transform:scaleX(0.7784);font-family:&quot;Liberation Serif&quot;,serif;">A</span>
<svg style="left:853.4px;top:559.2px;" width="12.4" height="12.4" viewBox="0 0 12.4 12.4"><circle cx="5.8" cy="5.8" r="5.2" fill="#1f83e0"/><path d="M2.2 2.4a5.2 5.2 0 0 1 7.6 0.6" stroke="#7cc4ff" stroke-width="1.2" fill="none"/><circle cx="9.4" cy="9.2" r="2.1" fill="#f0b429"/><circle cx="9.9" cy="9.7" r="1.1" fill="#e4572e"/></svg>
<span class="t" id="t218" style="left:883.4px;top:554.6px;font-size:7.4px;line-height:10.4px;color:#f2f2f2;transform:scaleX(0.8973);">18:00</span>
<span class="t" id="t219" style="left:873.8px;top:564.7px;font-size:7.4px;line-height:10.4px;color:#f2f2f2;transform:scaleX(0.9568);">2021/06/10</span>
<svg style="left:920.4px;top:559.4px;" width="10.4" height="10.4" viewBox="0 0 10.4 10.4"><path d="M0.6 0.6h9.2v7H6.2L4.4 9.4V7.6H0.6z" fill="#f4f4f4"/><path d="M2.2 2.6h6M2.2 4.2h6M2.2 5.8h4" stroke="#1c2f3e" stroke-width="0.55"/><circle cx="8.6" cy="8.2" r="1.7" fill="#3a4652" stroke="#ddd" stroke-width="0.5"/></svg>
<div style="left:940.6px;top:553.2px;width:0.8px;height:22.8px;background:#4d5a68;"></div>
</div></body></html>
